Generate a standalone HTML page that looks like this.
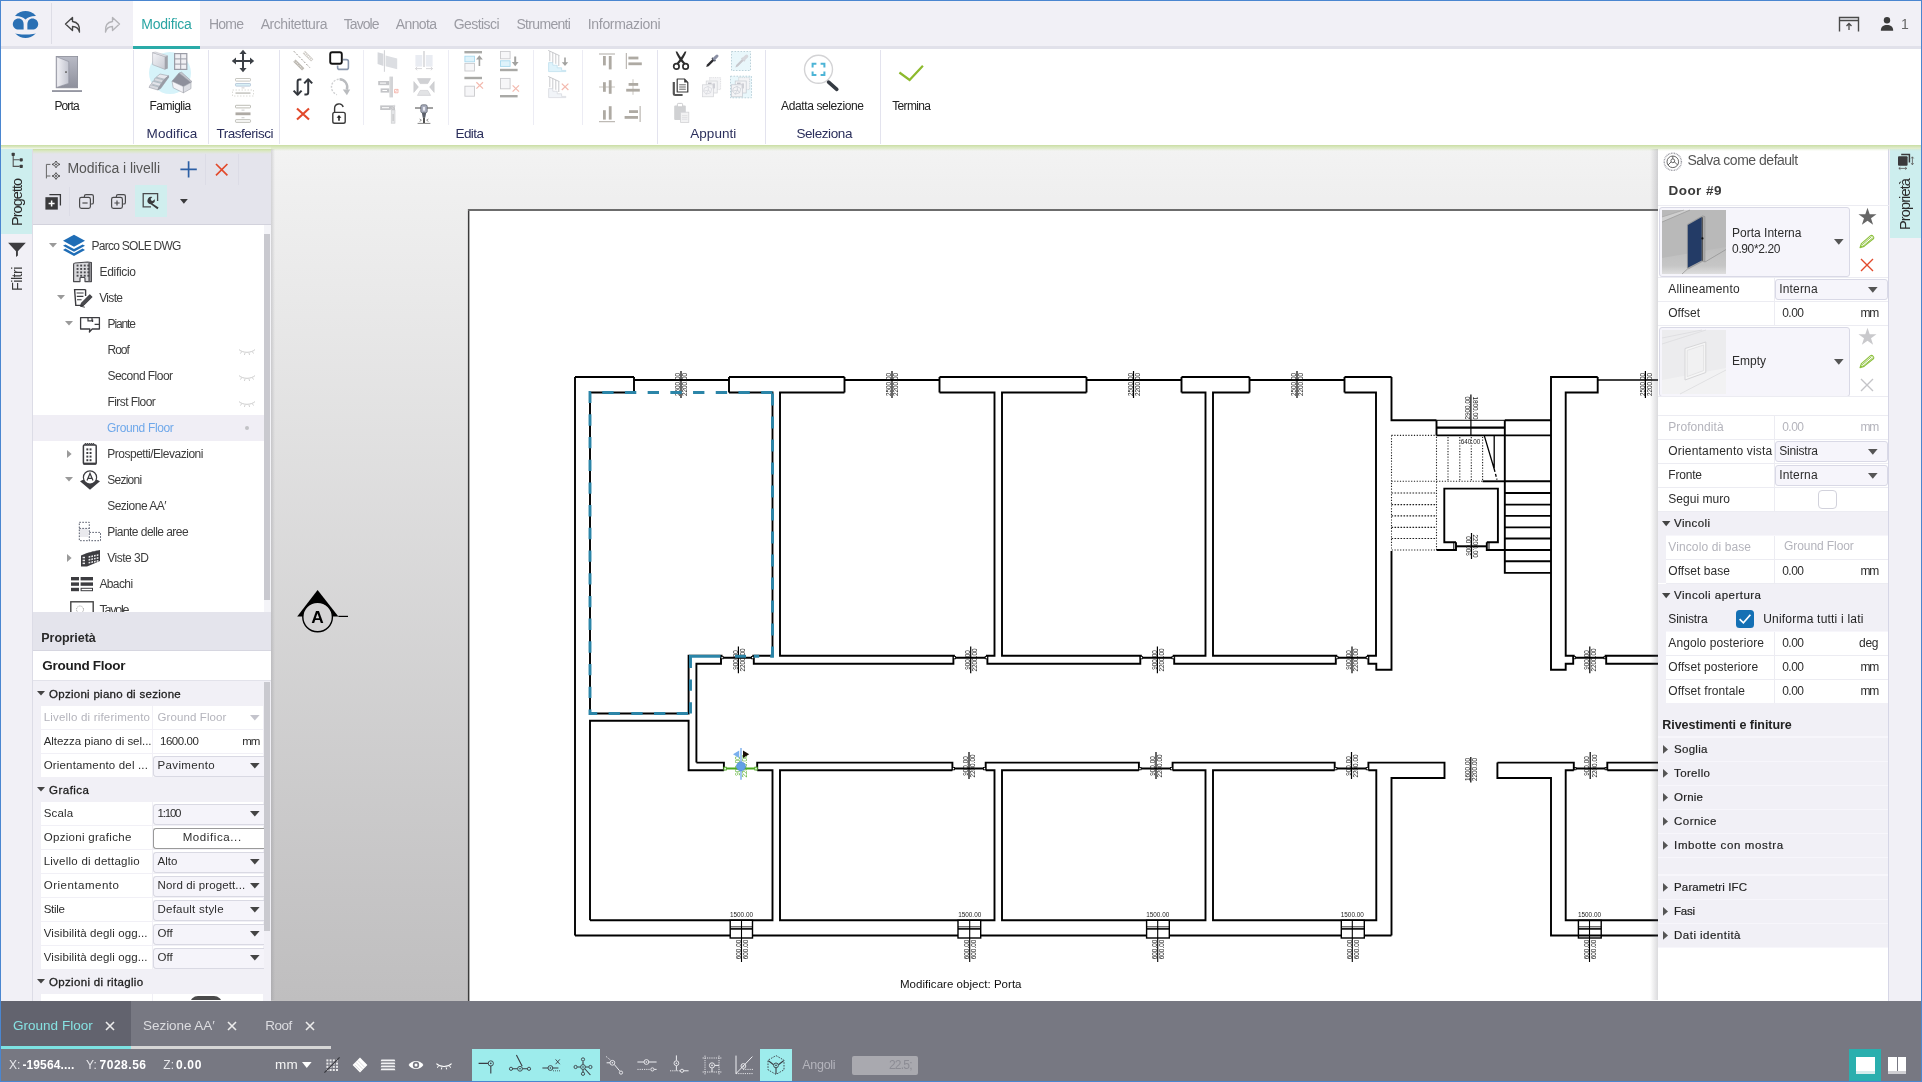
<!DOCTYPE html>
<html lang="it"><head><meta charset="utf-8"><title>Ground Floor</title>
<style>
html,body{margin:0;padding:0}
body{width:1922px;height:1082px;position:relative;overflow:hidden;background:#fff;font-family:"Liberation Sans",sans-serif}
.r{position:absolute;display:block}
.t{position:absolute;white-space:pre;line-height:1}
svg{overflow:visible}
</style></head><body><div id="app" style="position:absolute;left:0;top:0;width:1922px;height:1082px;will-change:transform">
<div class="r" style="left:1px;top:1px;width:1920px;height:45px;background:#f1f0f6;"></div>
<div class="r" style="left:1px;top:46px;width:1920px;height:3px;background:#e1e1ea;"></div>
<div class="r" style="left:133px;top:1px;width:67px;height:45px;background:#ffffff;"></div>
<div class="r" style="left:133px;top:46px;width:67px;height:3px;background:#2aaba8;"></div>
<div class="r" style="left:51px;top:3px;width:1px;height:41px;background:#dddde6;"></div>
<svg class="r" style="left:11px;top:10px;" width="29" height="29" viewBox="0 0 29 29">
<defs><clipPath id="lgc"><circle cx="14.5" cy="14.5" r="13.6"/></clipPath></defs>
<g clip-path="url(#lgc)" fill="#2a70b4">
<path d="M0 0H29V6.5C22 5.2 17.5 6.8 14.5 9.6C11.500 6.8 7 5.2 0 6.500Z"/>
<path d="M0 22.8C9 25.2 20 25.2 29 22.800V29H0Z"/>
<path d="M12.6 19.6H7.6C4.4 19.600 1.800 17.2 1.800 14C1.800 10.8 4.4 8.400 7.600 8.400C10.6 8.400 12.600 10.8 12.600 14Z"/>
<path d="M16.4 19.6H21.4C24.6 19.600 27.200 17.2 27.200 14C27.200 10.8 24.6 8.400 21.400 8.400C18.4 8.400 16.400 10.8 16.400 14Z"/>
</g></svg>
<svg class="r" style="left:63px;top:15px;" width="20" height="20" viewBox="0 0 20 20"><path d="M9.5 2.500L2.500 9L9.500 15.500V11.5C13.5 11.500 15.500 13 16.500 17C17 11 14.500 7 9.500 6.500Z" fill="none" stroke="#444" stroke-width="1.35" stroke-linejoin="round"/></svg>
<svg class="r" style="left:102px;top:15px;" width="20" height="20" viewBox="0 0 20 20"><path d="M10.5 2.500L17.500 9L10.500 15.500V11.5C6.500 11.500 4.500 13 3.500 17C3 11 5.500 7 10.500 6.500Z" fill="none" stroke="#b4b4b8" stroke-width="1.35" stroke-linejoin="round"/></svg>
<span class="t" style="left:141.3px;top:17.0px;font-size:14px;color:#2aa5a3;letter-spacing:-0.22px;">Modifica</span>
<span class="t" style="left:209.0px;top:17.0px;font-size:14px;color:#9b9ba3;letter-spacing:-0.79px;">Home</span>
<span class="t" style="left:260.7px;top:17.0px;font-size:14px;color:#9b9ba3;letter-spacing:-0.44px;">Architettura</span>
<span class="t" style="left:343.8px;top:17.0px;font-size:14px;color:#9b9ba3;letter-spacing:-0.95px;">Tavole</span>
<span class="t" style="left:395.8px;top:17.0px;font-size:14px;color:#9b9ba3;letter-spacing:-0.64px;">Annota</span>
<span class="t" style="left:453.7px;top:17.0px;font-size:14px;color:#9b9ba3;letter-spacing:-0.56px;">Gestisci</span>
<span class="t" style="left:516.4px;top:17.0px;font-size:14px;color:#9b9ba3;letter-spacing:-0.67px;">Strumenti</span>
<span class="t" style="left:587.8px;top:17.0px;font-size:14px;color:#9b9ba3;letter-spacing:-0.32px;">Informazioni</span>
<svg class="r" style="left:1838px;top:15px;" width="22" height="18" viewBox="0 0 22 18"><path d="M1.5 16.500V2.500H20.500V16.500M1.500 5.500H20.500" fill="none" stroke="#4a4a4a" stroke-width="1.4"/><path d="M11 15V8.500M8.500 11L11 8.500L13.500 11" fill="none" stroke="#4a4a4a" stroke-width="1.3"/></svg>
<svg class="r" style="left:1879.7px;top:16px;" width="14" height="16" viewBox="0 0 14 16"><circle cx="7" cy="4.200" r="3.2" fill="#3c3c3c"/><path d="M.8 14.800C.8 10.600 3.600 9 7 9C10.400 9 13.200 10.600 13.200 14.800Z" fill="#3c3c3c"/></svg>
<span class="t" style="left:1901.0px;top:17.0px;font-size:14px;color:#666;">1</span>
<div class="r" style="left:1px;top:49px;width:1920px;height:96px;background:#ffffff;"></div>
<div class="r" style="left:1px;top:145px;width:1920px;height:5px;background:linear-gradient(#c9dea2,#dbe8c4 40%,rgba(225,232,215,0))"></div>
<div class="r" style="left:133px;top:50px;width:1px;height:94px;background:#e3e3ee;"></div>
<div class="r" style="left:208px;top:50px;width:1px;height:94px;background:#e3e3ee;"></div>
<div class="r" style="left:279px;top:50px;width:1px;height:94px;background:#e3e3ee;"></div>
<div class="r" style="left:657px;top:50px;width:1px;height:94px;background:#e3e3ee;"></div>
<div class="r" style="left:765px;top:50px;width:1px;height:94px;background:#e3e3ee;"></div>
<div class="r" style="left:880px;top:50px;width:1px;height:94px;background:#e3e3ee;"></div>
<div class="r" style="left:363px;top:50px;width:1px;height:75px;background:#ececf4;"></div>
<div class="r" style="left:448px;top:50px;width:1px;height:75px;background:#ececf4;"></div>
<div class="r" style="left:533px;top:50px;width:1px;height:75px;background:#ececf4;"></div>
<div class="r" style="left:582px;top:50px;width:1px;height:75px;background:#ececf4;"></div>
<span class="t" style="left:54.4px;top:100.0px;font-size:12px;color:#222;letter-spacing:-0.87px;">Porta</span>
<span class="t" style="left:149.5px;top:100.0px;font-size:12px;color:#222;letter-spacing:-0.51px;">Famiglia</span>
<span class="t" style="left:781.1px;top:100.0px;font-size:12px;color:#222;letter-spacing:-0.39px;">Adatta selezione</span>
<span class="t" style="left:892.2px;top:100.0px;font-size:12px;color:#222;letter-spacing:-0.65px;">Termina</span>
<span class="t" style="left:146.6px;top:127.0px;font-size:13.5px;color:#2b2f5c;letter-spacing:0.06px;">Modifica</span>
<span class="t" style="left:216.4px;top:127.0px;font-size:13.5px;color:#2b2f5c;letter-spacing:-0.47px;">Trasferisci</span>
<span class="t" style="left:455.6px;top:127.0px;font-size:13.5px;color:#2b2f5c;letter-spacing:-0.62px;">Edita</span>
<span class="t" style="left:690.3px;top:127.0px;font-size:13.5px;color:#2b2f5c;letter-spacing:0.03px;">Appunti</span>
<span class="t" style="left:796.4px;top:127.0px;font-size:13.5px;color:#2b2f5c;letter-spacing:-0.41px;">Seleziona</span>
<svg class="r" style="left:50px;top:54px;" width="34" height="40" viewBox="0 0 34 40"><defs><linearGradient id="pg1" x1="0" y1="0" x2="1" y2="0"><stop offset="0" stop-color="#f2f2f6"/><stop offset="1" stop-color="#c2c4cf"/></linearGradient>
<linearGradient id="pg2" x1="0" y1="0" x2="0" y2="1"><stop offset="0" stop-color="#b9bbc6"/><stop offset="1" stop-color="#8e909c"/></linearGradient></defs>
<rect x="6.200" y="2.400" width="21.400" height="31.400" fill="url(#pg2)" stroke="#8a8c98" stroke-width=".8"/>
<path d="M6.600 2.800L18.800 7.600V29.400L6.600 33.400Z" fill="url(#pg1)" stroke="#8a8c98" stroke-width=".6"/>
<rect x="15.200" y="17.200" width="1.600" height="1.800" fill="#666"/>
<rect x="2" y="36.200" width="30" height="1.700" fill="#8a8c98"/></svg>
<svg class="r" style="left:148px;top:51px;" width="44" height="44" viewBox="0 0 44 44"><circle cx="22" cy="22" r="21" fill="#d6f3fa"/>
<defs><linearGradient id="fg1" x1="0" y1="0" x2="1" y2="1"><stop offset="0" stop-color="#f4f4f8"/><stop offset="1" stop-color="#c8cad2"/></linearGradient></defs>
<path d="M4.600 1.600L17 5.600V18.400L4.600 13.600Z" fill="url(#fg1)" stroke="#a4a6ae" stroke-width=".6"/>
<path d="M17 5.600L19.800 4.800V17.400L17 18.400Z" fill="#a0a2aa"/><path d="M4.600 1.600L7.400 1L19.800 4.800L17 5.600Z" fill="#e4e4ea" stroke="#a4a6ae" stroke-width=".4"/>
<rect x="26.600" y="2.600" width="12.200" height="15.800" fill="#f0f0f4" stroke="#9a9ca6" stroke-width="1.200"/>
<path d="M32.700 2.600V18.400M26.600 7.900H38.800M26.600 13.100H38.800" stroke="#9a9ca6" stroke-width="1"/>
<g stroke="#8e909a" stroke-width=".5"><path d="M1 36.400L9.800 39L11 36L2.400 33.600Z" fill="#d8dae0"/><path d="M3.400 33L12 35.400L13.200 32.400L4.800 30.200Z" fill="#e2e4ea"/><path d="M5.800 29.600L14.200 31.800L15.400 28.800L7.200 26.800Z" fill="#d8dae0"/><path d="M8.200 26.200L16.400 28.200L20.600 24.800L12 23Z" fill="#e6e8ee"/><path d="M9.800 39L12.600 37.600L20.600 26.400V24.800L16.400 28.200L11 36Z" fill="#9a9ca6"/></g>
<g stroke="#8e909a" stroke-width=".5"><path d="M24 30.200L31 22L43 31.400L35.400 35.600Z" fill="#8e909c"/><path d="M24 30.200L35.400 35.600V41.800L25.200 36.800Z" fill="#f4f4f8"/><path d="M35.400 35.600L43 31.400V37.600L35.400 41.800Z" fill="#dcdee4"/><path d="M31 22L33.600 21.200L44 30.600L43 31.400Z" fill="#c4c6ce"/></g></svg>
<svg class="r" style="left:231.0px;top:49.2px;" width="24" height="24" viewBox="0 0 24 24"><g fill="#3c4046"><path d="M12 .8L15.600 5H13V11H19V8.400L23.200 12L19 15.600V13H13V19H15.600L12 23.200L8.400 19H11V13H5V15.600L.8 12L5 8.400V11H11V5H8.400Z"/></g></svg>
<svg class="r" style="left:231.0px;top:75.2px;" width="24" height="24" viewBox="0 0 24 24"><g fill="none" stroke="#c6c6c0" stroke-width="1"><rect x="4.500" y="3.500" width="15" height="2.600" rx=".6"/><rect x="4.500" y="8.500" width="15" height="2.600" rx=".6" fill="#d9f0f6" stroke="#bcd"/><rect x="4.500" y="17.300" width="15" height="1.600" fill="#c8c8c4" stroke="none"/><rect x="1.500" y="15" width="21" height="6" stroke-dasharray="1.500 1.500" stroke="#dcdcd8"/></g><rect x="10.500" y="12.400" width="3" height="1" fill="#ccc"/></svg>
<svg class="r" style="left:231.0px;top:101.6px;" width="24" height="24" viewBox="0 0 24 24"><g fill="none" stroke="#bdbdb6" stroke-width="1"><rect x="4.500" y="3.300" width="15" height="2.600" rx=".6"/><rect x="4.500" y="17.700" width="15" height="2.600" rx=".6"/></g><rect x="4.500" y="10.400" width="15" height="2.800" fill="#aeaaa4"/><rect x="10.500" y="7.600" width="3" height="1" fill="#ccc"/><rect x="10.500" y="15.200" width="3" height="1" fill="#ccc"/></svg>
<svg class="r" style="left:291.0px;top:48.9px;" width="24" height="24" viewBox="0 0 24 24"><g stroke="#c0bdb6" fill="none"><path d="M2.800 2.200L18.800 18.600" stroke-dasharray="2 1.600" stroke-width=".9" stroke="#8a8680"/><path d="M12.800 3L21.200 11.400" stroke-width="3.200" stroke="#cfccc6"/><path d="M12.800 3L21.200 11.400" stroke-width="1.600" stroke="#fff" stroke-dasharray="1 1"/><path d="M3.400 11.600L12.200 20.400" stroke-width="3.200" stroke="#b9b5ae"/><path d="M3.400 11.600L12.200 20.400" stroke-width="1.200" stroke="#e8e6e2" stroke-dasharray="1 1"/></g></svg>
<svg class="r" style="left:327.0px;top:48.9px;" width="24" height="24" viewBox="0 0 24 24"><path d="M15.800 10.600H19.400Q21.400 10.600 21.400 12.600V18.400Q21.400 20.400 19.400 20.400H12.600Q10.600 20.400 10.600 18.400V16.400" fill="none" stroke="#8b98ad" stroke-width="1.600"/><rect x="3.200" y="3.200" width="11.600" height="11.600" rx="2" fill="#fff" stroke="#141414" stroke-width="1.900"/></svg>
<svg class="r" style="left:291.0px;top:75.2px;" width="24" height="24" viewBox="0 0 24 24"><g fill="none" stroke="#33373d" stroke-width="2" stroke-linejoin="round"><path d="M10.400 4.400H8.600Q6.600 4.400 6.600 6.400V19.200"/><path d="M2.600 15.600L6.600 19.800L10.600 15.600"/><path d="M13.400 19.600H15.200Q17.200 19.600 17.200 17.600V4.800"/><path d="M13.200 8.400L17.200 4.200L21.200 8.400"/></g></svg>
<svg class="r" style="left:327.0px;top:75.2px;" width="24" height="24" viewBox="0 0 24 24"><path d="M12.600 4.200A7.800 7.800 0 0 1 19.800 14.600" fill="none" stroke="#babcbf" stroke-width="2.400"/><path d="M15.800 14.600H23.200L19.900 20.200Z" fill="#babcbf"/><path d="M11.600 4.200A7.900 7.900 0 0 0 10 19.600" fill="none" stroke="#cfd0d2" stroke-width="1.400" stroke-dasharray="2 1.400"/></svg>
<svg class="r" style="left:291.0px;top:101.6px;" width="24" height="24" viewBox="0 0 24 24"><path d="M6 6.400L18 17.600M18 6.400L6 17.600" stroke="#e2492b" stroke-width="2.100" fill="none"/></svg>
<svg class="r" style="left:327.0px;top:101.6px;" width="24" height="24" viewBox="0 0 24 24"><rect x="5.800" y="10.400" width="12.400" height="10.800" rx="1.800" fill="none" stroke="#3a3a3a" stroke-width="1.400"/><path d="M7.600 10.400V6.400A4.400 4.400 0 0 1 16.200 5" fill="none" stroke="#3a3a3a" stroke-width="1.400"/><path d="M12 13L14.400 15.800H12.800V18.800H11.200V15.800H9.600Z" fill="#222"/></svg>
<svg class="r" style="left:375.5px;top:48.9px;" width="24" height="24" viewBox="0 0 24 24"><path d="M1.600 3.200L7.400 4.800V17L1.600 15Z" fill="#d6d8dc"/><path d="M9.600 6.600L21.200 9.600V20.200L9.600 17.200Z" fill="#dcdee2"/><path d="M8.400 1.200V22.800" stroke="#cfd0d4" stroke-width="1"/></svg>
<svg class="r" style="left:412.0px;top:48.9px;" width="24" height="24" viewBox="0 0 24 24"><rect x="3.400" y="6" width="6.800" height="11.600" fill="#e9ecf2"/><rect x="13.800" y="6" width="6.800" height="11.600" fill="#e9ecf2"/><path d="M12 2V18" stroke="#c9cacd" stroke-width="1.200"/><path d="M3.600 19.600H10M14 19.600H20.400M5.200 18L3.400 19.600L5.200 21.200M18.800 18L20.600 19.600L18.800 21.200" fill="none" stroke="#d2d3d6" stroke-width=".9"/></svg>
<svg class="r" style="left:375.5px;top:75.2px;" width="24" height="24" viewBox="0 0 24 24"><rect x="14.400" y="1.600" width="2.600" height="20.800" fill="#d2d3d6"/><rect x="13.600" y="1.600" width=".8" height="20.800" fill="#bfc0c3"/><rect x="2.200" y="6" width="11" height="4.200" fill="#c4c5c8"/><rect x="4.600" y="13.400" width="8.600" height="4.200" fill="#c4c5c8"/><path d="M4 8.100H10M6.400 15.500H11" stroke="#fff" stroke-width="1"/><path d="M18.600 14.400H22V17.800H18.600ZM18.600 17.800L22 14.400" stroke="#f5b5ab" stroke-width=".9" fill="none"/></svg>
<svg class="r" style="left:412.0px;top:75.2px;" width="24" height="24" viewBox="0 0 24 24"><g fill="#d0d1d4" stroke="#c2c3c6" stroke-width=".5"><path d="M5.400 3.600H18.600L15.800 8.600H8.200Z"/><path d="M5.400 20.400H18.600L15.800 15.400H8.200Z" fill="#e2e3e5"/><path d="M1.800 6.600L6.400 12L1.800 17.400Z"/><path d="M22.200 6.600L17.600 12L22.200 17.400Z"/></g></svg>
<svg class="r" style="left:375.5px;top:101.6px;" width="24" height="24" viewBox="0 0 24 24"><rect x="4.200" y="3.400" width="14.800" height="4.600" fill="#c4c5c8"/><rect x="15.200" y="8" width="3.800" height="13.200" fill="#e4e5e7" stroke="#c8c9cc" stroke-width=".6"/><path d="M6 5.700H13" stroke="#fff" stroke-width="1"/><path d="M17.100 12V19" stroke="#bbb" stroke-width=".9"/><path d="M14.800 8L19 3.400" stroke="#d8d8da" stroke-width="2.400" stroke-dasharray="1 1"/></svg>
<svg class="r" style="left:412.0px;top:101.6px;" width="24" height="24" viewBox="0 0 24 24"><rect x="8.800" y="2.800" width="6.400" height="8" rx="1.600" fill="#a9adbd" stroke="#555a66" stroke-width=".7"/><rect x="11" y="5" width="2" height="3.600" fill="#e8eaf2"/><path d="M3 6H8.800M15.200 6H21" stroke="#444" stroke-width="1"/><path d="M9.800 10.800H14.200L13.200 15.800H10.800Z" fill="#5a5f6a"/><path d="M12 15.800V21" stroke="#222" stroke-width="1.600"/><path d="M5.600 21.400H18.400" stroke="#777" stroke-width=".9"/><path d="M7.600 17L9.400 18.200L7.600 19.400M16.400 17L14.600 18.200L16.400 19.400" fill="none" stroke="#666" stroke-width=".7"/></svg>
<svg class="r" style="left:460.8px;top:49.9px;" width="24" height="24" viewBox="0 0 24 24"><rect x="3.400" y="1" width="17.600" height="2.400" fill="#a9a9a6"/><rect x="3.900" y="6.200" width="9.600" height="5.600" fill="#dff3fb" stroke="#a9d9ee" stroke-width=".9"/><rect x="3.900" y="13.400" width="9.600" height="7.600" fill="#f6f6f8" stroke="#c9c9cc" stroke-width=".9"/><path d="M19.200 16V9.400H21.800L18.400 5.200L15 9.400H17.600V16Z" fill="#a2a2a0"/></svg>
<svg class="r" style="left:497.3px;top:49.9px;" width="24" height="24" viewBox="0 0 24 24"><rect x="3" y="18.800" width="17.600" height="2.400" fill="#a9a9a6"/><rect x="3.500" y="1.400" width="9.600" height="7.400" fill="#f6f6f8" stroke="#c9c9cc" stroke-width=".9"/><rect x="3.500" y="10.800" width="9.600" height="5.600" fill="#dff3fb" stroke="#a9d9ee" stroke-width=".9"/><path d="M17.200 6.400V12H14.800L18.200 16.200L21.600 12H19.200V6.400Z" fill="#a2a2a0"/></svg>
<svg class="r" style="left:460.8px;top:76.2px;" width="24" height="24" viewBox="0 0 24 24"><rect x="3.400" y=".8" width="17.600" height="2.400" fill="#a9a9a6"/><rect x="3.900" y="10.200" width="9.600" height="10" fill="#f6f6f8" stroke="#c9c9cc" stroke-width=".9"/><path d="M15.400 6.200L22 12.600M22 6.200L15.400 12.600" stroke="#f3b9ae" stroke-width="1.200"/></svg>
<svg class="r" style="left:497.3px;top:76.2px;" width="24" height="24" viewBox="0 0 24 24"><rect x="3" y="19" width="17.600" height="2.400" fill="#a9a9a6"/><rect x="3.500" y="2.400" width="9.600" height="10.400" fill="#f6f6f8" stroke="#c9c9cc" stroke-width=".9"/><path d="M15.600 9.400L22 15.600M22 9.400L15.600 15.600" stroke="#f3b9ae" stroke-width="1.200"/></svg>
<svg class="r" style="left:546.4px;top:48.9px;" width="24" height="24" viewBox="0 0 24 24"><path d="M2.600 13.600H6.800V16.200H11.200V18.800H15.600V21.400H19.800V22.600H2.600Z" fill="#dff3fb" stroke="#b9dcec" stroke-width=".7"/><path d="M2.200 1.400L13.400 6.600M3.800 2.200V12.200M6.800 3.600V13.600M9.800 5V14.800M12.800 6.400V17" stroke="#c2c3c6" stroke-width=".9" fill="none"/><path d="M18.200 8.400V13.200H15.800L19 17L22.200 13.200H19.800V8.400Z" fill="#a2a2a0"/></svg>
<svg class="r" style="left:546.4px;top:75.2px;" width="24" height="24" viewBox="0 0 24 24"><path d="M2.600 13.600H6.800V16.200H11.200V18.800H15.600V21.400H19.800V22.600H2.600Z" fill="#f1f4f8" stroke="#d4d7dc" stroke-width=".7"/><path d="M2.200 1.400L13.400 6.600M3.800 2.200V12.200M6.800 3.600V13.600M9.800 5V14.800M12.800 6.400V17" stroke="#c2c3c6" stroke-width=".9" fill="none"/><path d="M15.800 8.600L22.400 15M22.400 8.600L15.800 15" stroke="#f3b9ae" stroke-width="1.200"/></svg>
<svg class="r" style="left:595.1px;top:48.9px;" width="24" height="24" viewBox="0 0 24 24"><g fill="#aeaaa3"><rect x="4" y="4.500" width="16" height="1"/><rect x="8" y="7" width="2.800" height="9.400"/><rect x="13.800" y="7" width="2.800" height="13.400"/></g></svg>
<svg class="r" style="left:621.1px;top:48.9px;" width="24" height="24" viewBox="0 0 24 24"><g fill="#aeaaa3"><rect x="4.800" y="4" width="1" height="16"/><rect x="7.400" y="7.600" width="10" height="2.800"/><rect x="7.400" y="13.400" width="13.400" height="2.800"/></g></svg>
<svg class="r" style="left:595.1px;top:75.2px;" width="24" height="24" viewBox="0 0 24 24"><g fill="#aeaaa3"><rect x="4" y="11.500" width="16" height="1" fill="#c9c6c0"/><rect x="8" y="7.200" width="2.800" height="9.600"/><rect x="13.800" y="5.200" width="2.800" height="13.600"/></g></svg>
<svg class="r" style="left:621.1px;top:75.2px;" width="24" height="24" viewBox="0 0 24 24"><g fill="#aeaaa3"><rect x="11.500" y="4.200" width="1" height="15.600" fill="#c9c6c0"/><rect x="7.600" y="8" width="9.600" height="2.800"/><rect x="5.200" y="13.800" width="13.600" height="2.800"/></g></svg>
<svg class="r" style="left:595.1px;top:101.6px;" width="24" height="24" viewBox="0 0 24 24"><g fill="#aeaaa3"><rect x="4" y="19.200" width="16" height="1"/><rect x="8" y="8.200" width="2.800" height="9.400"/><rect x="13.800" y="4.200" width="2.800" height="13.400"/></g></svg>
<svg class="r" style="left:621.1px;top:101.6px;" width="24" height="24" viewBox="0 0 24 24"><g fill="#aeaaa3"><rect x="18.600" y="4" width="1" height="16"/><rect x="8" y="8.200" width="9" height="2.800"/><rect x="3.600" y="14" width="13.400" height="2.800"/></g></svg>
<svg class="r" style="left:668.8px;top:48.9px;" width="24" height="24" viewBox="0 0 24 24"><g fill="none" stroke="#2e2e2e" stroke-width="1.700"><circle cx="7.400" cy="17.400" r="2.700"/><circle cx="16.600" cy="17.400" r="2.700"/></g><path d="M6.600 2.600C7.600 6 10.400 11.400 14.800 15.600L16.200 14C13 10 9.600 5 8.200 2.400Z" fill="#2e2e2e"/><path d="M17.400 2.600C16.400 6 13.600 11.400 9.200 15.600L7.800 14C11 10 14.400 5 15.800 2.400Z" fill="#2e2e2e"/></svg>
<svg class="r" style="left:700.0px;top:48.9px;" width="24" height="24" viewBox="0 0 24 24"><path d="M6.200 18L7 15.600L12.800 9.800L14.400 11.400L8.600 17.200Z" fill="#2c2c30"/><path d="M12 8.800L15.400 12.200" stroke="#555a66" stroke-width="1.700"/><path d="M14.400 9.600L17 7" stroke="#8a8fa4" stroke-width="3" stroke-linecap="round"/></svg>
<svg class="r" style="left:729.0px;top:48.9px;" width="24" height="24" viewBox="0 0 24 24"><rect x="2.500" y="2.500" width="19" height="19" fill="#e9f7fb" stroke="#b5cdd6" stroke-width=".9" stroke-dasharray="1.600 1.400"/><path d="M6.400 18.400L7.200 16L13.200 10L14.800 11.600L8.800 17.600Z" fill="#c6c7cc"/><path d="M12.600 9L15.800 12.200" stroke="#cfd0d6" stroke-width="1.800"/><path d="M15 9.800L17.600 7.200" stroke="#d6d7dc" stroke-width="3.400" stroke-linecap="round"/></svg>
<svg class="r" style="left:668.8px;top:75.2px;" width="24" height="24" viewBox="0 0 24 24"><path d="M4.800 7V18.600Q4.800 20 6.200 20H13.600" fill="none" stroke="#555" stroke-width="2.200"/><path d="M8.200 4H15.400L18.800 7.400V17H8.200Z" fill="#fff" stroke="#3a3a3a" stroke-width="1.200" stroke-linejoin="round"/><path d="M15.200 4V7.600H18.800Z" fill="#3a3a3a"/><path d="M10.200 9.800H16.800M10.200 12H16.800M10.200 14.200H16.800" stroke="#555" stroke-width=".9"/></svg>
<svg class="r" style="left:700.0px;top:75.2px;" width="24" height="24" viewBox="0 0 24 24"><g fill="#f4f4f6" stroke="#d2d3d8" stroke-width=".7"><rect x="9.600" y="2.600" width="11" height="12" stroke-dasharray="1 .8"/><rect x="6.200" y="6" width="11" height="12"/><rect x="2.600" y="9.800" width="11" height="12"/></g><path d="M4.400 13L8 11.400L11.800 13.600L10.600 17.800L6 19.200L3.600 16.200ZM8 11.400L8.600 15L10.600 17.800M8.600 15L6 19.200M8.600 15L3.600 16.200" fill="none" stroke="#d6d7dc" stroke-width=".7"/><rect x="8" y="7.600" width="3.600" height="1.400" fill="#c3c4ca"/><rect x="12.600" y="8.400" width="2.400" height="5" fill="#cfd0d6"/></svg>
<svg class="r" style="left:729.0px;top:75.2px;" width="24" height="24" viewBox="0 0 24 24"><rect x="1.500" y="1.200" width="21" height="21.600" fill="#e9f7fb" stroke="#b5cdd6" stroke-width=".9" stroke-dasharray="1.600 1.400"/><g fill="#f4f4f6" stroke="#c3c8d0" stroke-width=".7"><rect x="9.600" y="2.600" width="11" height="12" stroke-dasharray="1 .8"/><rect x="6.200" y="6" width="11" height="12"/><rect x="2.600" y="9.800" width="11" height="12"/></g><path d="M4.400 13L8 11.400L11.800 13.600L10.600 17.800L6 19.200L3.600 16.200ZM8 11.400L8.600 15L10.600 17.800M8.600 15L6 19.200M8.600 15L3.600 16.200" fill="none" stroke="#c9cdd4" stroke-width=".7"/><rect x="8" y="7.600" width="3.600" height="1.400" fill="#c3c4ca"/><rect x="12.600" y="8.400" width="2.400" height="5" fill="#cfd0d6"/></svg>
<svg class="r" style="left:668.8px;top:100.8px;" width="24" height="24" viewBox="0 0 24 24"><rect x="5.200" y="4.400" width="11.600" height="14.600" rx="1" fill="#d0d1d3"/><rect x="8.400" y="2.400" width="5.200" height="3.400" rx=".8" fill="#fff" stroke="#c9cacc" stroke-width=".9"/><rect x="11.600" y="11.200" width="8.200" height="10.200" fill="#f2f2f3" stroke="#d2d3d5" stroke-width=".8"/><path d="M13 14.600H18.400M13 16.400H18.400M13 18.200H18.400" stroke="#dcdcde" stroke-width=".8"/></svg>
<svg class="r" style="left:800px;top:52px;" width="44" height="44" viewBox="0 0 44 44"><circle cx="18.500" cy="17.300" r="14" fill="#fff" stroke="#d3d3d5" stroke-width="1.400"/><path d="M28.600 30.200L36.800 37.400" stroke="#353b43" stroke-width="3.600" stroke-linecap="round"/><g fill="none" stroke="#4cb4d6" stroke-width="2"><path d="M12.600 15.400V11.800H16.400M20.600 11.800H24.400V15.400M24.400 19.400V23H20.600M16.400 23H12.600V19.400"/></g></svg>
<svg class="r" style="left:896px;top:62px;" width="30" height="22" viewBox="0 0 30 22"><path d="M3.400 10.500L13.600 18L26.900 3.700" fill="none" stroke="#8dba2d" stroke-width="2.200"/></svg>
<div class="r" style="left:1px;top:149px;width:32px;height:852px;background:#f1f0f6;"></div>
<div class="r" style="left:32px;top:149px;width:1px;height:852px;background:#dcdce6;"></div>
<div class="r" style="left:1px;top:149px;width:31px;height:85px;background:#cdeeee;"></div>
<span class="t" style="left:22.4px;top:225.5px;font-size:14.5px;color:#2a2a2a;transform-origin:0 0;transform:rotate(-90deg) translateY(-12.3px);letter-spacing:-0.95px;">Progetto</span>
<span class="t" style="left:21.7px;top:291.0px;font-size:14.5px;color:#3a3a3a;transform-origin:0 0;transform:rotate(-90deg) translateY(-12.3px);letter-spacing:-0.58px;">Filtri</span>
<svg class="r" style="left:9px;top:152px;" width="16" height="19" viewBox="0 0 16 19"><g fill="#3c3c3c"><rect x="2.600" y=".8" width="3.200" height="3.200" rx=".8"/><rect x="10.600" y="6.200" width="3.200" height="3.200" rx=".8"/><rect x="10.600" y="12.800" width="3.200" height="3.200" rx=".8"/></g><path d="M4.200 4V14.400H10.600M4.200 7.800H10.600" fill="none" stroke="#555" stroke-width="1.100"/></svg>
<svg class="r" style="left:7px;top:241px;" width="20" height="18" viewBox="0 0 20 18"><path d="M1.100 1.800H18.800L10.900 10.200V14.600L9 16V10.200Z" fill="#3d3d40"/></svg>
<div class="r" style="left:33px;top:149px;width:238px;height:75px;background:#e4e4ec;"></div>
<div class="r" style="left:33px;top:149px;width:238px;height:5px;background:linear-gradient(#c9dea2,#dbe8c4 40%,rgba(228,228,236,0))"></div>
<div class="r" style="left:33px;top:224px;width:238px;height:1px;background:#d2d2dc;"></div>
<div class="r" style="left:135px;top:185px;width:32px;height:32px;background:#d0eeee;"></div>
<div class="r" style="left:205px;top:154px;width:1px;height:31px;background:#dcdce6;"></div>
<div class="r" style="left:238px;top:154px;width:1px;height:31px;background:#dcdce6;"></div>
<div class="r" style="left:69px;top:187px;width:1px;height:29px;background:#dcdce6;"></div>
<span class="t" style="left:67.5px;top:161.0px;font-size:14px;color:#555;letter-spacing:-0.05px;">Modifica i livelli</span>
<svg class="r" style="left:45px;top:159px;" width="18" height="22" viewBox="0 0 18 22"><path d="M1.400 19.400V5.400H5.400M1.400 17H5.400" fill="none" stroke="#666" stroke-width="1"/><g fill="none" stroke="#444" stroke-width=".9"><path d="M11 2L12.600 4.400L15 5.400L12.600 6.400L11 8.800L9.400 6.400L7 5.400L9.400 4.400Z"/><path d="M11 13.600L12.600 16L15 17L12.600 18L11 20.400L9.400 18L7 17L9.400 16Z"/></g><circle cx="11" cy="5.400" r=".9" fill="#444"/><circle cx="11" cy="17" r=".9" fill="#444"/></svg>
<svg class="r" style="left:179px;top:160px;" width="19" height="19" viewBox="0 0 19 19"><path d="M9.600 1.200V17.600M1.400 9.400H17.800" stroke="#2c5fa5" stroke-width="1.700" fill="none"/></svg>
<svg class="r" style="left:214px;top:162px;" width="15" height="15" viewBox="0 0 15 15"><path d="M2 2L13.400 13.400M13.400 2L2 13.400" stroke="#e2492b" stroke-width="1.700" fill="none"/></svg>
<svg class="r" style="left:44px;top:192px;" width="19" height="19" viewBox="0 0 19 19"><path d="M5.400 2.600H16.400V13.600" fill="none" stroke="#3a3a3c" stroke-width="1.300"/><rect x="1.400" y="5.200" width="12.400" height="12.400" fill="#3a3a3c"/><path d="M7.600 8.400V14.400M4.600 11.400H10.600" stroke="#fff" stroke-width="1.500"/></svg>
<svg class="r" style="left:77px;top:192px;" width="19" height="19" viewBox="0 0 19 19"><path d="M7.400 5.400V4.200Q7.400 2.600 9 2.600H14.800Q16.400 2.600 16.400 4.200V10.400Q16.400 12 14.800 12H13.600" fill="none" stroke="#4a4a4c" stroke-width="1.200"/><rect x="2.600" y="5.400" width="10.800" height="11" rx="1.800" fill="none" stroke="#4a4a4c" stroke-width="1.200"/><path d="M5.400 11H10.600" stroke="#4a4a4c" stroke-width="1.200"/></svg>
<svg class="r" style="left:109px;top:192px;" width="19" height="19" viewBox="0 0 19 19"><path d="M7.400 5.400V4.200Q7.400 2.600 9 2.600H14.800Q16.400 2.600 16.400 4.200V10.400Q16.400 12 14.800 12H13.600" fill="none" stroke="#4a4a4c" stroke-width="1.200"/><rect x="2.600" y="5.400" width="10.800" height="11" rx="1.800" fill="none" stroke="#4a4a4c" stroke-width="1.200"/><path d="M5.400 11H10.600M8 8.400V13.600" stroke="#4a4a4c" stroke-width="1.200"/></svg>
<svg class="r" style="left:141px;top:191px;" width="20" height="20" viewBox="0 0 20 20"><path d="M16.600 10V2.600H2.200V15.800H10" fill="none" stroke="#4a4a4c" stroke-width="1.300"/><path d="M6.800 8.200A3.300 3.300 0 0 1 11.400 6L9.600 7.800L10.200 9.400L11.800 10L13.600 8.200A3.300 3.300 0 0 1 11.400 12.400L17.600 16.400L16.400 18.200L9.800 13.200A3.300 3.300 0 0 1 6.800 8.200Z" fill="#3a3a3c"/></svg>
<svg class="r" style="left:179px;top:198px;" width="10" height="7" viewBox="0 0 10 7"><path d="M1 1H8.800L4.900 5.800Z" fill="#3a3a3c"/></svg>
<div class="r" style="left:33px;top:225px;width:231px;height:387px;background:#ffffff;"></div>
<div class="r" style="left:264px;top:225px;width:7px;height:387px;background:#f4f4f8;"></div>
<div class="r" style="left:264px;top:234px;width:6px;height:366px;background:#c9c9cf;"></div>
<div class="r" style="left:33px;top:415px;width:231px;height:26px;background:#f0eef5;"></div>
<span class="t" style="left:91.6px;top:240.0px;font-size:12px;color:#3c3c3c;letter-spacing:-0.74px;">Parco SOLE DWG</span>
<span class="t" style="left:99.5px;top:266.0px;font-size:12px;color:#3c3c3c;letter-spacing:-0.31px;">Edificio</span>
<span class="t" style="left:99.2px;top:292.0px;font-size:12px;color:#3c3c3c;letter-spacing:-0.67px;">Viste</span>
<span class="t" style="left:107.5px;top:318.0px;font-size:12px;color:#3c3c3c;letter-spacing:-1.11px;">Piante</span>
<span class="t" style="left:107.5px;top:344.0px;font-size:12px;color:#3c3c3c;letter-spacing:-1.02px;">Roof</span>
<span class="t" style="left:107.5px;top:370.0px;font-size:12px;color:#3c3c3c;letter-spacing:-0.53px;">Second Floor</span>
<span class="t" style="left:107.5px;top:396.0px;font-size:12px;color:#3c3c3c;letter-spacing:-0.57px;">First Floor</span>
<span class="t" style="left:107.0px;top:422.0px;font-size:12px;color:#6fa8ea;letter-spacing:-0.35px;">Ground Floor</span>
<span class="t" style="left:107.2px;top:448.0px;font-size:12px;color:#3c3c3c;letter-spacing:-0.48px;">Prospetti/Elevazioni</span>
<span class="t" style="left:107.2px;top:474.0px;font-size:12px;color:#3c3c3c;letter-spacing:-0.74px;">Sezioni</span>
<span class="t" style="left:107.2px;top:500.0px;font-size:12px;color:#3c3c3c;letter-spacing:-0.50px;">Sezione AA′</span>
<span class="t" style="left:107.2px;top:526.0px;font-size:12px;color:#3c3c3c;letter-spacing:-0.54px;">Piante delle aree</span>
<span class="t" style="left:107.2px;top:552.0px;font-size:12px;color:#3c3c3c;letter-spacing:-0.48px;">Viste 3D</span>
<span class="t" style="left:99.4px;top:578.0px;font-size:12px;color:#3c3c3c;letter-spacing:-0.60px;">Abachi</span>
<div class="r" style="left:33px;top:598px;width:231px;height:14px;overflow:hidden">
<span class="t" style="left:66.4px;top:6.0px;font-size:12.5px;color:#3c3c3c;letter-spacing:-1.20px;">Tavole</span>
<svg class="r" style="left:37px;top:3px;" width="24" height="16" viewBox="0 0 24 16"><rect x=".8" y=".8" width="22.400" height="16" fill="none" stroke="#444" stroke-width="1.400"/><circle cx="10" cy="8.500" r="3.500" fill="none" stroke="#888" stroke-width=".8" stroke-dasharray="1.200 1"/></svg>
</div>
<svg class="r" style="left:48.9px;top:243.0px;" width="8" height="5" viewBox="0 0 8 5"><path d="M0 0H8L4 4.600Z" fill="#9a9a9a"/></svg>
<svg class="r" style="left:57px;top:295.0px;" width="8" height="5" viewBox="0 0 8 5"><path d="M0 0H8L4 4.600Z" fill="#9a9a9a"/></svg>
<svg class="r" style="left:64.9px;top:321.1px;" width="8" height="5" viewBox="0 0 8 5"><path d="M0 0H8L4 4.600Z" fill="#9a9a9a"/></svg>
<svg class="r" style="left:66.8px;top:449.8px;" width="5" height="8" viewBox="0 0 5 8"><path d="M0 0V8L4.600 4Z" fill="#9a9a9a"/></svg>
<svg class="r" style="left:64.8px;top:477.0px;" width="8" height="5" viewBox="0 0 8 5"><path d="M0 0H8L4 4.600Z" fill="#9a9a9a"/></svg>
<svg class="r" style="left:66.8px;top:553.8px;" width="5" height="8" viewBox="0 0 5 8"><path d="M0 0V8L4.600 4Z" fill="#9a9a9a"/></svg>
<svg class="r" style="left:238px;top:347.5px;" width="18" height="8" viewBox="0 0 18 8"><path d="M1 1.600C5 5.200 13 5.200 17 1.600" fill="none" stroke="#c6c6c6" stroke-width=".9"/><path d="M3.600 3.800L2.400 5.600M7 5L6.400 7M11 5L11.600 7M14.400 3.800L15.600 5.600" stroke="#c6c6c6" stroke-width=".8"/></svg>
<svg class="r" style="left:238px;top:373.5px;" width="18" height="8" viewBox="0 0 18 8"><path d="M1 1.600C5 5.200 13 5.200 17 1.600" fill="none" stroke="#c6c6c6" stroke-width=".9"/><path d="M3.600 3.800L2.400 5.600M7 5L6.400 7M11 5L11.600 7M14.400 3.800L15.600 5.600" stroke="#c6c6c6" stroke-width=".8"/></svg>
<svg class="r" style="left:238px;top:399.5px;" width="18" height="8" viewBox="0 0 18 8"><path d="M1 1.600C5 5.200 13 5.200 17 1.600" fill="none" stroke="#c6c6c6" stroke-width=".9"/><path d="M3.600 3.800L2.400 5.600M7 5L6.400 7M11 5L11.600 7M14.400 3.800L15.600 5.600" stroke="#c6c6c6" stroke-width=".8"/></svg>
<div class="r" style="left:245px;top:426px;width:4px;height:4px;border-radius:2px;background:#c2c2c6"></div>
<svg class="r" style="left:62px;top:234px;" width="24" height="22" viewBox="0 0 24 22"><g fill="#1f6db6"><path d="M12 .8L23 6.800L12 12.800L1 6.800Z"/><path d="M3.400 10.400L12 15.100L20.600 10.400L23 11.700L12 17.700L1 11.700Z"/><path d="M3.400 14.600L12 19.300L20.600 14.600L23 15.900L12 21.900L1 15.900Z"/></g></svg>
<svg class="r" style="left:72px;top:261px;" width="21" height="22" viewBox="0 0 21 22"><path d="M1.600 20.600V3.400Q1.600 2 3 2L15.600 1L19.400 1.600V20.600H13V17.600Q13 16.400 11.800 16.400H9.200Q8 16.400 8 17.600V20.600Z" fill="#d9d9dc" stroke="#4a4a4e" stroke-width="1.200" stroke-linejoin="round"/><path d="M17.400 1.400V20.600" stroke="#6a6a6e" stroke-width="2.200"/><rect x="4.6" y="3.6" width="1.900" height="1.900" fill="#4a4a4e"/><rect x="4.6" y="7.0" width="1.900" height="1.900" fill="#4a4a4e"/><rect x="4.6" y="10.4" width="1.900" height="1.900" fill="#4a4a4e"/><rect x="4.6" y="13.799999999999999" width="1.900" height="1.900" fill="#4a4a4e"/><rect x="8.2" y="3.6" width="1.900" height="1.900" fill="#4a4a4e"/><rect x="8.2" y="7.0" width="1.900" height="1.900" fill="#4a4a4e"/><rect x="8.2" y="10.4" width="1.900" height="1.900" fill="#4a4a4e"/><rect x="8.2" y="13.799999999999999" width="1.900" height="1.900" fill="#4a4a4e"/><rect x="11.8" y="3.6" width="1.900" height="1.900" fill="#4a4a4e"/><rect x="11.8" y="7.0" width="1.900" height="1.900" fill="#4a4a4e"/><rect x="11.8" y="10.4" width="1.900" height="1.900" fill="#4a4a4e"/><rect x="11.8" y="13.799999999999999" width="1.900" height="1.900" fill="#4a4a4e"/><rect x="15.4" y="3.6" width="1.900" height="1.900" fill="#4a4a4e"/><rect x="15.4" y="7.0" width="1.900" height="1.900" fill="#4a4a4e"/><rect x="15.4" y="10.4" width="1.900" height="1.900" fill="#4a4a4e"/><rect x="15.4" y="13.799999999999999" width="1.900" height="1.900" fill="#4a4a4e"/></svg>
<svg class="r" style="left:72px;top:287px;" width="22" height="22" viewBox="0 0 22 22"><path d="M13.600 2.600H2.600L3.800 18.400H11" fill="none" stroke="#3c3c40" stroke-width="1.400"/><path d="M13.600 2.600V9" stroke="#3c3c40" stroke-width="1.400"/><path d="M4.600 6H11.600M4.800 9.400H11.400M5 12.800H9.600" stroke="#3c3c40" stroke-width="1.100"/><path d="M8.400 19.200L9.400 16L17.800 7.600L20.200 10L11.800 18.400Z" fill="#4a4a4e" stroke="#2a2a2e" stroke-width=".7"/><path d="M8.400 19.200L12.800 20.200" stroke="#3c3c40" stroke-width="1"/></svg>
<svg class="r" style="left:79px;top:316px;" width="22" height="18" viewBox="0 0 22 18"><path d="M1.600 1.600H20.400V13H13.200L10.400 16L10.800 13H1.600Z" fill="#fff" stroke="#3c3c40" stroke-width="1.300" stroke-linejoin="round"/><path d="M9 1.600V4.800H13V1.600M15.600 8.400H20.400M13.600 3.400V6" stroke="#3c3c40" stroke-width="1.200" fill="none"/></svg>
<svg class="r" style="left:82px;top:442px;" width="16" height="24" viewBox="0 0 16 24"><rect x="1.400" y="3" width="12.800" height="19" rx="1" fill="#fff" stroke="#3c3c40" stroke-width="1.500"/><path d="M2.600 3L3.400 1L4.400 3L5.400 1L6.400 3L7.400 1L8.400 3L9.400 1L10.400 3L11.400 1L12.400 3" fill="none" stroke="#3c3c40" stroke-width=".9"/><rect x="1.400" y="20.600" width="12.800" height="2" fill="#3c3c40"/><rect x="4.4" y="6.4" width="1.900" height="2" fill="#3c3c40"/><rect x="4.4" y="10.0" width="1.900" height="2" fill="#3c3c40"/><rect x="4.4" y="13.600000000000001" width="1.900" height="2" fill="#3c3c40"/><rect x="4.4" y="17.200000000000003" width="1.900" height="2" fill="#3c3c40"/><rect x="7.6000000000000005" y="6.4" width="1.900" height="2" fill="#3c3c40"/><rect x="7.6000000000000005" y="10.0" width="1.900" height="2" fill="#3c3c40"/><rect x="7.6000000000000005" y="13.600000000000001" width="1.900" height="2" fill="#3c3c40"/><rect x="7.6000000000000005" y="17.200000000000003" width="1.900" height="2" fill="#3c3c40"/></svg>
<svg class="r" style="left:79px;top:469px;" width="22" height="22" viewBox="0 0 22 22"><path d="M1 12.200L11 20.800L21 12.200L17.400 10.600Q11 19 4.600 10.600Z" fill="#3c3c40"/><circle cx="11" cy="8.400" r="6.600" fill="#fff" stroke="#3c3c40" stroke-width="1.200"/><path d="M8 11.600L11 4.400L14 11.600M9 9.400H13" fill="none" stroke="#3c3c40" stroke-width="1.200"/></svg>
<svg class="r" style="left:78px;top:521px;" width="24" height="21" viewBox="0 0 24 21"><rect x="1.300" y="7.400" width="9" height="8.600" fill="#eaeaee"/><g fill="none" stroke="#555a6a" stroke-width="1" stroke-dasharray="1.600 1.400"><rect x="1.300" y="1.300" width="10" height="18.400"/><path d="M1.300 7.400H11.300M11.300 11.400H22.500V19.700H11.300"/></g></svg>
<svg class="r" style="left:80px;top:548px;" width="21" height="20" viewBox="0 0 21 20"><path d="M1 7.400L7 5L20 2V13L7 18.600H1Z" fill="#3c3c40"/><path d="M1 7.400L13 3.200L20 2L7 5.600Z" fill="#55555a"/><path d="M8.6 8.2l1.700 -.35v1.600l-1.700 .35Z" fill="#e8e8ea"/><path d="M8.6 11.1l1.700 -.35v1.600l-1.700 .35Z" fill="#e8e8ea"/><path d="M8.6 14.0l1.700 -.35v1.600l-1.700 .35Z" fill="#e8e8ea"/><path d="M11.3 7.6499999999999995l1.700 -.35v1.600l-1.700 .35Z" fill="#e8e8ea"/><path d="M11.3 10.549999999999999l1.700 -.35v1.600l-1.700 .35Z" fill="#e8e8ea"/><path d="M11.3 13.45l1.700 -.35v1.600l-1.700 .35Z" fill="#e8e8ea"/><path d="M14.0 7.1l1.700 -.35v1.600l-1.700 .35Z" fill="#e8e8ea"/><path d="M14.0 10.0l1.700 -.35v1.600l-1.700 .35Z" fill="#e8e8ea"/><path d="M14.0 12.9l1.700 -.35v1.600l-1.700 .35Z" fill="#e8e8ea"/><path d="M16.700000000000003 6.549999999999999l1.700 -.35v1.600l-1.700 .35Z" fill="#e8e8ea"/><path d="M16.700000000000003 9.45l1.700 -.35v1.600l-1.700 .35Z" fill="#e8e8ea"/><path d="M16.700000000000003 12.35l1.700 -.35v1.600l-1.700 .35Z" fill="#e8e8ea"/><rect x="2.600" y="8.8" width="2.400" height="1.500" fill="#e8e8ea"/><rect x="2.600" y="11.700000000000001" width="2.400" height="1.500" fill="#e8e8ea"/><rect x="2.600" y="14.600000000000001" width="2.400" height="1.500" fill="#e8e8ea"/></svg>
<svg class="r" style="left:70px;top:576px;" width="24" height="16" viewBox="0 0 24 16"><g fill="#3c3c40"><rect x="1" y="1" width="8" height="3.400"/><rect x="10.600" y="1" width="12.400" height="3.400"/><rect x="1" y="6.400" width="8" height="3.400"/><rect x="10.600" y="6.400" width="12.400" height="3.400"/><rect x="1" y="11.800" width="8" height="3.400"/></g><rect x="11.100" y="12.300" width="11.400" height="2.400" fill="#fff" stroke="#3c3c40" stroke-width="1"/></svg>
<div class="r" style="left:33px;top:612px;width:238px;height:39px;background:#e4e4ec;"></div>
<div class="r" style="left:33px;top:650px;width:238px;height:1px;background:#d6d6e0;"></div>
<div class="r" style="left:33px;top:651px;width:238px;height:30px;background:#ffffff;"></div>
<div class="r" style="left:33px;top:681px;width:238px;height:320px;background:#f1f0f6;"></div>
<div class="r" style="left:33px;top:680px;width:238px;height:1px;background:#e2e2ea;"></div>
<span class="t" style="left:41.3px;top:632.0px;font-size:12.5px;color:#2a2a2a;font-weight:700;letter-spacing:-0.06px;">Proprietà</span>
<span class="t" style="left:42.3px;top:659.0px;font-size:13.5px;color:#1e1e1e;font-weight:700;letter-spacing:-0.28px;">Ground Floor</span>
<div class="r" style="left:264px;top:682px;width:6px;height:249px;background:#c9c9cf;"></div>
<svg class="r" style="left:37px;top:691.1999999999999px;" width="8" height="5" viewBox="0 0 8 5"><path d="M0 0H8L4 4.600Z" fill="#444"/></svg>
<span class="t" style="left:49.0px;top:689.0px;font-size:11.5px;color:#1e1e1e;letter-spacing:0.28px;-webkit-text-stroke:.3px #1e1e1e;">Opzioni piano di sezione</span>
<div class="r" style="left:41px;top:706.0px;width:111px;height:23.0px;background:#ffffff;"></div>
<div class="r" style="left:153px;top:706.0px;width:110.19999999999999px;height:23.0px;background:#ffffff;"></div>
<span class="t" style="left:43.7px;top:712.0px;font-size:11.5px;color:#b4b4bc;letter-spacing:0.19px;">Livello di riferimento</span>
<span class="t" style="left:157.5px;top:712.0px;font-size:11.5px;color:#b4b4bc;letter-spacing:0.10px;">Ground Floor</span>
<svg class="r" style="left:250px;top:715.0px;" width="10" height="6" viewBox="0 0 10 6"><path d="M0 0H9.600L4.800 5.600Z" fill="#c4c4cc"/></svg>
<div class="r" style="left:41px;top:730.0px;width:111px;height:23.0px;background:#ffffff;"></div>
<div class="r" style="left:153px;top:730.0px;width:110.19999999999999px;height:23.0px;background:#ffffff;"></div>
<span class="t" style="left:43.7px;top:736.0px;font-size:11.5px;color:#2c2c2c;letter-spacing:-0.04px;">Altezza piano di sel...</span>
<span class="t" style="left:159.9px;top:736.0px;font-size:11.5px;color:#2c2c2c;letter-spacing:-0.41px;">1600.00</span>
<span class="t" style="left:242.3px;top:736.0px;font-size:11.5px;color:#2c2c2c;letter-spacing:-1.17px;">mm</span>
<div class="r" style="left:41px;top:754.0px;width:111px;height:23.0px;background:#ffffff;"></div>
<div class="r" style="left:153px;top:754.0px;width:110.19999999999999px;height:23.0px;background:#ffffff;"></div>
<span class="t" style="left:43.7px;top:760.0px;font-size:11.5px;color:#2c2c2c;letter-spacing:0.17px;">Orientamento del ...</span>
<div class="r" style="left:153px;top:755.5px;width:110px;height:19px;background:#f5f4fa;border:1px solid #d9d9e3;border-right:none;border-radius:3px 0 0 3px"></div>
<span class="t" style="left:157.5px;top:760.0px;font-size:11.5px;color:#2c2c2c;letter-spacing:0.36px;">Pavimento</span>
<svg class="r" style="left:250px;top:763.0px;" width="10" height="6" viewBox="0 0 10 6"><path d="M0 0H9.600L4.800 5.600Z" fill="#444"/></svg>
<svg class="r" style="left:37px;top:787.1999999999999px;" width="8" height="5" viewBox="0 0 8 5"><path d="M0 0H8L4 4.600Z" fill="#444"/></svg>
<span class="t" style="left:49.0px;top:785.0px;font-size:11.5px;color:#1e1e1e;letter-spacing:0.49px;-webkit-text-stroke:.3px #1e1e1e;">Grafica</span>
<div class="r" style="left:41px;top:802.0px;width:111px;height:23.0px;background:#ffffff;"></div>
<div class="r" style="left:153px;top:802.0px;width:110.19999999999999px;height:23.0px;background:#ffffff;"></div>
<span class="t" style="left:43.7px;top:808.0px;font-size:11.5px;color:#2c2c2c;letter-spacing:0.20px;">Scala</span>
<div class="r" style="left:153px;top:803.5px;width:110px;height:19px;background:#f5f4fa;border:1px solid #d9d9e3;border-right:none;border-radius:3px 0 0 3px"></div>
<span class="t" style="left:157.5px;top:808.0px;font-size:11.5px;color:#2c2c2c;letter-spacing:-1.20px;">1:100</span>
<svg class="r" style="left:250px;top:811.0px;" width="10" height="6" viewBox="0 0 10 6"><path d="M0 0H9.600L4.800 5.600Z" fill="#444"/></svg>
<div class="r" style="left:41px;top:826.0px;width:111px;height:23.0px;background:#ffffff;"></div>
<div class="r" style="left:153px;top:826.0px;width:110.19999999999999px;height:23.0px;background:#ffffff;"></div>
<span class="t" style="left:43.7px;top:832.0px;font-size:11.5px;color:#2c2c2c;letter-spacing:0.30px;">Opzioni grafiche</span>
<div class="r" style="left:153px;top:827.500px;width:110px;height:19px;background:#fff;border:1px solid #9a9a9a;border-right:none;border-radius:3px 0 0 3px"></div>
<span class="t" style="left:182.7px;top:832.0px;font-size:11.5px;color:#2c2c2c;letter-spacing:0.60px;">Modifica...</span>
<div class="r" style="left:41px;top:850.0px;width:111px;height:23.0px;background:#ffffff;"></div>
<div class="r" style="left:153px;top:850.0px;width:110.19999999999999px;height:23.0px;background:#ffffff;"></div>
<span class="t" style="left:43.7px;top:856.0px;font-size:11.5px;color:#2c2c2c;letter-spacing:0.24px;">Livello di dettaglio</span>
<div class="r" style="left:153px;top:851.5px;width:110px;height:19px;background:#f5f4fa;border:1px solid #d9d9e3;border-right:none;border-radius:3px 0 0 3px"></div>
<span class="t" style="left:157.5px;top:856.0px;font-size:11.5px;color:#2c2c2c;letter-spacing:0.06px;">Alto</span>
<svg class="r" style="left:250px;top:859.0px;" width="10" height="6" viewBox="0 0 10 6"><path d="M0 0H9.600L4.800 5.600Z" fill="#444"/></svg>
<div class="r" style="left:41px;top:874.0px;width:111px;height:23.0px;background:#ffffff;"></div>
<div class="r" style="left:153px;top:874.0px;width:110.19999999999999px;height:23.0px;background:#ffffff;"></div>
<span class="t" style="left:43.7px;top:880.0px;font-size:11.5px;color:#2c2c2c;letter-spacing:0.51px;">Orientamento</span>
<div class="r" style="left:153px;top:875.5px;width:110px;height:19px;background:#f5f4fa;border:1px solid #d9d9e3;border-right:none;border-radius:3px 0 0 3px"></div>
<span class="t" style="left:157.5px;top:880.0px;font-size:11.5px;color:#2c2c2c;letter-spacing:0.12px;">Nord di progett...</span>
<svg class="r" style="left:250px;top:883.0px;" width="10" height="6" viewBox="0 0 10 6"><path d="M0 0H9.600L4.800 5.600Z" fill="#444"/></svg>
<div class="r" style="left:41px;top:898.0px;width:111px;height:23.0px;background:#ffffff;"></div>
<div class="r" style="left:153px;top:898.0px;width:110.19999999999999px;height:23.0px;background:#ffffff;"></div>
<span class="t" style="left:43.7px;top:904.0px;font-size:11.5px;color:#2c2c2c;letter-spacing:-0.27px;">Stile</span>
<div class="r" style="left:153px;top:899.5px;width:110px;height:19px;background:#f5f4fa;border:1px solid #d9d9e3;border-right:none;border-radius:3px 0 0 3px"></div>
<span class="t" style="left:157.5px;top:904.0px;font-size:11.5px;color:#2c2c2c;letter-spacing:0.23px;">Default style</span>
<svg class="r" style="left:250px;top:907.0px;" width="10" height="6" viewBox="0 0 10 6"><path d="M0 0H9.600L4.800 5.600Z" fill="#444"/></svg>
<div class="r" style="left:41px;top:922.0px;width:111px;height:23.0px;background:#ffffff;"></div>
<div class="r" style="left:153px;top:922.0px;width:110.19999999999999px;height:23.0px;background:#ffffff;"></div>
<span class="t" style="left:43.7px;top:928.0px;font-size:11.5px;color:#2c2c2c;letter-spacing:0.11px;">Visibilità degli ogg...</span>
<div class="r" style="left:153px;top:923.5px;width:110px;height:19px;background:#f5f4fa;border:1px solid #d9d9e3;border-right:none;border-radius:3px 0 0 3px"></div>
<span class="t" style="left:157.5px;top:928.0px;font-size:11.5px;color:#2c2c2c;letter-spacing:0.03px;">Off</span>
<svg class="r" style="left:250px;top:931.0px;" width="10" height="6" viewBox="0 0 10 6"><path d="M0 0H9.600L4.800 5.600Z" fill="#444"/></svg>
<div class="r" style="left:41px;top:946.0px;width:111px;height:23.0px;background:#ffffff;"></div>
<div class="r" style="left:153px;top:946.0px;width:110.19999999999999px;height:23.0px;background:#ffffff;"></div>
<span class="t" style="left:43.7px;top:952.0px;font-size:11.5px;color:#2c2c2c;letter-spacing:0.11px;">Visibilità degli ogg...</span>
<div class="r" style="left:153px;top:947.5px;width:110px;height:19px;background:#f5f4fa;border:1px solid #d9d9e3;border-right:none;border-radius:3px 0 0 3px"></div>
<span class="t" style="left:157.5px;top:952.0px;font-size:11.5px;color:#2c2c2c;letter-spacing:0.03px;">Off</span>
<svg class="r" style="left:250px;top:955.0px;" width="10" height="6" viewBox="0 0 10 6"><path d="M0 0H9.600L4.800 5.600Z" fill="#444"/></svg>
<svg class="r" style="left:37px;top:979.1999999999999px;" width="8" height="5" viewBox="0 0 8 5"><path d="M0 0H8L4 4.600Z" fill="#444"/></svg>
<span class="t" style="left:49.0px;top:977.0px;font-size:11.5px;color:#1e1e1e;letter-spacing:0.33px;-webkit-text-stroke:.3px #1e1e1e;">Opzioni di ritaglio</span>
<div class="r" style="left:41px;top:994px;width:111px;height:7px;background:#ffffff;"></div>
<div class="r" style="left:153px;top:994px;width:110.19999999999999px;height:7px;background:#ffffff;"></div>
<div class="r" style="left:190px;top:996px;width:32px;height:16px;border-radius:8px;background:#4a4a4a;clip-path:inset(0 0 12px 0)"></div>
<div class="r" style="left:271px;top:149px;width:1387px;height:852px;background:linear-gradient(#f3f3f3,#f0f0f0 4%,#bfbebf 100%)"></div>
<div class="r" style="left:271px;top:145px;width:1387px;height:6px;background:linear-gradient(#c9dea2,#dbe8c4 40%,rgba(240,240,240,0))"></div>
<div class="r" style="left:271px;top:149px;width:4px;height:851px;background:linear-gradient(90deg,rgba(120,120,130,.25),rgba(120,120,130,0))"></div>
<div class="r" style="left:468px;top:209px;width:1190px;height:792px;background:#fff"></div>
<svg class="r" style="left:0;top:0;font-family:'Liberation Sans',sans-serif" width="1658" height="1000" viewBox="0 0 1658 1000"><path d="M468.650 209V1001" stroke="#3c3c3c" stroke-width="1.500"/><path d="M468 210H1658" stroke="#6c6c6c" stroke-width="2"/><path d="M575 377H634" fill="none" stroke="#000" stroke-width="1.9" /><path d="M729 377H844.5" fill="none" stroke="#000" stroke-width="1.9" /><path d="M939.5 377H1086.5" fill="none" stroke="#000" stroke-width="1.9" /><path d="M1181.5 377H1249.5" fill="none" stroke="#000" stroke-width="1.9" /><path d="M1344.5 377H1391.5" fill="none" stroke="#000" stroke-width="1.9" /><path d="M634 377V392.5M729 377V392.5" fill="none" stroke="#000" stroke-width="1.9" /><path d="M634 380H729" fill="none" stroke="#000" stroke-width="1.8" /><path d="M681 371V398" fill="none" stroke="#000" stroke-width="1.2" /><text x="680.2" y="384.5" font-size="6.4" fill="#222" text-anchor="middle" transform="rotate(-90 680.2 384.5)">2500.00</text><text x="687.3" y="384.5" font-size="6.4" fill="#222" text-anchor="middle" transform="rotate(-90 687.3 384.5)">2200.00</text><path d="M844.5 377V392.5M939.5 377V392.5" fill="none" stroke="#000" stroke-width="1.9" /><path d="M844.5 380H939.5" fill="none" stroke="#000" stroke-width="1.8" /><path d="M892 371V398" fill="none" stroke="#000" stroke-width="1.2" /><text x="891.2" y="384.5" font-size="6.4" fill="#222" text-anchor="middle" transform="rotate(-90 891.2 384.5)">2500.00</text><text x="898.3" y="384.5" font-size="6.4" fill="#222" text-anchor="middle" transform="rotate(-90 898.3 384.5)">2200.00</text><path d="M1086.5 377V392.5M1181.5 377V392.5" fill="none" stroke="#000" stroke-width="1.9" /><path d="M1086.5 380H1181.5" fill="none" stroke="#000" stroke-width="1.8" /><path d="M1133.5 371V398" fill="none" stroke="#000" stroke-width="1.2" /><text x="1132.7" y="384.5" font-size="6.4" fill="#222" text-anchor="middle" transform="rotate(-90 1132.7 384.5)">2500.00</text><text x="1139.8" y="384.5" font-size="6.4" fill="#222" text-anchor="middle" transform="rotate(-90 1139.8 384.5)">2200.00</text><path d="M1249.5 377V392.5M1344.5 377V392.5" fill="none" stroke="#000" stroke-width="1.9" /><path d="M1249.5 380H1344.5" fill="none" stroke="#000" stroke-width="1.8" /><path d="M1297 371V398" fill="none" stroke="#000" stroke-width="1.2" /><text x="1296.2" y="384.5" font-size="6.4" fill="#222" text-anchor="middle" transform="rotate(-90 1296.2 384.5)">2500.00</text><text x="1303.3" y="384.5" font-size="6.4" fill="#222" text-anchor="middle" transform="rotate(-90 1303.3 384.5)">2200.00</text><path d="M575 377V935.500" fill="none" stroke="#000" stroke-width="1.9" /><path d="M1391.500 377V420.300H1436.500" fill="none" stroke="#000" stroke-width="1.9" /><path d="M844.5 392.5H780V655.8H954.9M985.9 655.8H994.5V392.5H939.5" fill="none" stroke="#000" stroke-width="1.9" /><path d="M1086.5 392.5H1002V655.8H1141.8M1172.7 655.8H1205.5V392.5H1181.5" fill="none" stroke="#000" stroke-width="1.9" /><path d="M1249.5 392.5H1213V655.8H1337.3M1366.9 655.8H1376V392.5H1344.5" fill="none" stroke="#000" stroke-width="1.9" /><path d="M634 392.5H590V713.500H688.600V655.8H722.500M752.300 655.8H772.500V392.5H729" fill="none" stroke="#000" stroke-width="1.9" /><path d="M696.400 762.600V663.8H721V655.8" fill="none" stroke="#000" stroke-width="1.9" /><path d="M753.800 655.8V663.8H953.400V655.8" fill="none" stroke="#000" stroke-width="1.9" /><path d="M987.400 655.8V663.8H1140.300V655.8" fill="none" stroke="#000" stroke-width="1.9" /><path d="M1174.200 655.8V663.8H1335.800V655.8" fill="none" stroke="#000" stroke-width="1.9" /><path d="M1368.400 655.8V663.700H1376.300V669.700H1391.500V551" fill="none" stroke="#000" stroke-width="1.9" /><path d="M721 657.700H753.8" fill="none" stroke="#000" stroke-width="2" /><rect x="721" y="656.400" width="2.200" height="2.400" fill="#fff" stroke="#000" stroke-width=".8"/><rect x="751.5999999999999" y="656.400" width="2.200" height="2.400" fill="#fff" stroke="#000" stroke-width=".8"/><path d="M738.4 646.600V673.200" fill="none" stroke="#000" stroke-width="1.2" /><text x="737.6" y="660" font-size="6.4" fill="#222" text-anchor="middle" transform="rotate(-90 737.6 660)">900.00</text><text x="744.6999999999999" y="660" font-size="6.4" fill="#222" text-anchor="middle" transform="rotate(-90 744.6999999999999 660)">2200.00</text><path d="M953.4 657.700H987.4" fill="none" stroke="#000" stroke-width="2" /><rect x="953.4" y="656.400" width="2.200" height="2.400" fill="#fff" stroke="#000" stroke-width=".8"/><rect x="985.1999999999999" y="656.400" width="2.200" height="2.400" fill="#fff" stroke="#000" stroke-width=".8"/><path d="M970.7 646.600V673.200" fill="none" stroke="#000" stroke-width="1.2" /><text x="969.9000000000001" y="660" font-size="6.4" fill="#222" text-anchor="middle" transform="rotate(-90 969.9000000000001 660)">900.00</text><text x="977.0" y="660" font-size="6.4" fill="#222" text-anchor="middle" transform="rotate(-90 977.0 660)">2200.00</text><path d="M1140.3 657.700H1174.2" fill="none" stroke="#000" stroke-width="2" /><rect x="1140.3" y="656.400" width="2.200" height="2.400" fill="#fff" stroke="#000" stroke-width=".8"/><rect x="1172.0" y="656.400" width="2.200" height="2.400" fill="#fff" stroke="#000" stroke-width=".8"/><path d="M1157.4 646.600V673.200" fill="none" stroke="#000" stroke-width="1.2" /><text x="1156.6000000000001" y="660" font-size="6.4" fill="#222" text-anchor="middle" transform="rotate(-90 1156.6000000000001 660)">900.00</text><text x="1163.7" y="660" font-size="6.4" fill="#222" text-anchor="middle" transform="rotate(-90 1163.7 660)">2200.00</text><path d="M1335.8 657.700H1368.4" fill="none" stroke="#000" stroke-width="2" /><rect x="1335.8" y="656.400" width="2.200" height="2.400" fill="#fff" stroke="#000" stroke-width=".8"/><rect x="1366.2" y="656.400" width="2.200" height="2.400" fill="#fff" stroke="#000" stroke-width=".8"/><path d="M1352 646.600V673.200" fill="none" stroke="#000" stroke-width="1.2" /><text x="1351.2" y="660" font-size="6.4" fill="#222" text-anchor="middle" transform="rotate(-90 1351.2 660)">900.00</text><text x="1358.3" y="660" font-size="6.4" fill="#222" text-anchor="middle" transform="rotate(-90 1358.3 660)">2200.00</text><path d="M1573.2 657.700H1606.2" fill="none" stroke="#000" stroke-width="2" /><rect x="1573.2" y="656.400" width="2.200" height="2.400" fill="#fff" stroke="#000" stroke-width=".8"/><rect x="1604.0" y="656.400" width="2.200" height="2.400" fill="#fff" stroke="#000" stroke-width=".8"/><path d="M1589.8 646.600V673.200" fill="none" stroke="#000" stroke-width="1.2" /><text x="1589.0" y="660" font-size="6.4" fill="#222" text-anchor="middle" transform="rotate(-90 1589.0 660)">900.00</text><text x="1596.1" y="660" font-size="6.4" fill="#222" text-anchor="middle" transform="rotate(-90 1596.1 660)">2200.00</text><path d="M696.400 762.6H723.900V770.2" fill="none" stroke="#000" stroke-width="1.9" /><path d="M757.200 770.2V762.6H952.400V770.2" fill="none" stroke="#000" stroke-width="1.9" /><path d="M985.700 770.2V762.6H1138.900V770.2" fill="none" stroke="#000" stroke-width="1.9" /><path d="M1172.600 770.2V762.6H1334.700V770.2" fill="none" stroke="#000" stroke-width="1.9" /><path d="M1368.400 770.2V762.6H1444.500V778H1391.500V935.5" fill="none" stroke="#000" stroke-width="1.9" /><path d="M590 920.3V720.700H688.600V770.2H723.900" fill="none" stroke="#000" stroke-width="1.9" /><path d="M757.200 770.2H772.500V920.3H590" fill="none" stroke="#000" stroke-width="1.9" /><path d="M952.4 770.2H780V920.3H994.5V770.2H985.7" fill="none" stroke="#000" stroke-width="1.9" /><path d="M1138.9 770.2H1002V920.3H1205.5V770.2H1172.6" fill="none" stroke="#000" stroke-width="1.9" /><path d="M1334.7 770.2H1213V920.3H1376.3V770.2H1368.4" fill="none" stroke="#000" stroke-width="1.9" /><path d="M575 935.5H1391.500" fill="none" stroke="#000" stroke-width="1.9" /><rect x="730.2" y="920.3" width="22.299999999999955" height="17.700" fill="#fff" stroke="#000" stroke-width="1.400"/><path d="M730.2 926.800H752.5" fill="none" stroke="#000" stroke-width="0.8" /><path d="M730.2 928.900H752.5" fill="none" stroke="#000" stroke-width="1.6" /><path d="M741.5 920.3V962" fill="none" stroke="#000" stroke-width="1.1" /><text x="741.5" y="916.6" font-size="6.4" fill="#222" text-anchor="middle">1500.00</text><text x="740.7" y="949.5" font-size="6.4" fill="#222" text-anchor="middle" transform="rotate(-90 740.7 949.5)">600.00</text><text x="747.8" y="949.5" font-size="6.4" fill="#222" text-anchor="middle" transform="rotate(-90 747.8 949.5)">600.00</text><rect x="958" y="920.3" width="22.700000000000045" height="17.700" fill="#fff" stroke="#000" stroke-width="1.400"/><path d="M958 926.800H980.7" fill="none" stroke="#000" stroke-width="0.8" /><path d="M958 928.900H980.7" fill="none" stroke="#000" stroke-width="1.6" /><path d="M969.7 920.3V962" fill="none" stroke="#000" stroke-width="1.1" /><text x="969.7" y="916.6" font-size="6.4" fill="#222" text-anchor="middle">1500.00</text><text x="968.9000000000001" y="949.5" font-size="6.4" fill="#222" text-anchor="middle" transform="rotate(-90 968.9000000000001 949.5)">600.00</text><text x="976.0" y="949.5" font-size="6.4" fill="#222" text-anchor="middle" transform="rotate(-90 976.0 949.5)">600.00</text><rect x="1146.6" y="920.3" width="22.700000000000045" height="17.700" fill="#fff" stroke="#000" stroke-width="1.400"/><path d="M1146.6 926.800H1169.3" fill="none" stroke="#000" stroke-width="0.8" /><path d="M1146.6 928.900H1169.3" fill="none" stroke="#000" stroke-width="1.6" /><path d="M1157.7 920.3V962" fill="none" stroke="#000" stroke-width="1.1" /><text x="1157.7" y="916.6" font-size="6.4" fill="#222" text-anchor="middle">1500.00</text><text x="1156.9" y="949.5" font-size="6.4" fill="#222" text-anchor="middle" transform="rotate(-90 1156.9 949.5)">600.00</text><text x="1164.0" y="949.5" font-size="6.4" fill="#222" text-anchor="middle" transform="rotate(-90 1164.0 949.5)">600.00</text><rect x="1341.3" y="920.3" width="23.0" height="17.700" fill="#fff" stroke="#000" stroke-width="1.400"/><path d="M1341.3 926.800H1364.3" fill="none" stroke="#000" stroke-width="0.8" /><path d="M1341.3 928.900H1364.3" fill="none" stroke="#000" stroke-width="1.6" /><path d="M1352.3 920.3V962" fill="none" stroke="#000" stroke-width="1.1" /><text x="1352.3" y="916.6" font-size="6.4" fill="#222" text-anchor="middle">1500.00</text><text x="1351.5" y="949.5" font-size="6.4" fill="#222" text-anchor="middle" transform="rotate(-90 1351.5 949.5)">600.00</text><text x="1358.6" y="949.5" font-size="6.4" fill="#222" text-anchor="middle" transform="rotate(-90 1358.6 949.5)">600.00</text><rect x="1578.4" y="920.3" width="22.799999999999955" height="17.700" fill="#fff" stroke="#000" stroke-width="1.400"/><path d="M1578.4 926.800H1601.2" fill="none" stroke="#000" stroke-width="0.8" /><path d="M1578.4 928.900H1601.2" fill="none" stroke="#000" stroke-width="1.6" /><path d="M1589.5 920.3V962" fill="none" stroke="#000" stroke-width="1.1" /><text x="1589.5" y="916.6" font-size="6.4" fill="#222" text-anchor="middle">1500.00</text><text x="1588.7" y="949.5" font-size="6.4" fill="#222" text-anchor="middle" transform="rotate(-90 1588.7 949.5)">600.00</text><text x="1595.8" y="949.5" font-size="6.4" fill="#222" text-anchor="middle" transform="rotate(-90 1595.8 949.5)">600.00</text><path d="M952.4 768.600H985.7" fill="none" stroke="#000" stroke-width="2" /><rect x="952.4" y="767.400" width="2.200" height="2.400" fill="#fff" stroke="#000" stroke-width=".8"/><rect x="983.5" y="767.400" width="2.200" height="2.400" fill="#fff" stroke="#000" stroke-width=".8"/><path d="M969 752V779" fill="none" stroke="#000" stroke-width="1.2" /><text x="968.2" y="766" font-size="6.4" fill="#222" text-anchor="middle" transform="rotate(-90 968.2 766)">900.00</text><text x="975.3" y="766" font-size="6.4" fill="#222" text-anchor="middle" transform="rotate(-90 975.3 766)">2200.00</text><path d="M1138.9 768.600H1172.6" fill="none" stroke="#000" stroke-width="2" /><rect x="1138.9" y="767.400" width="2.200" height="2.400" fill="#fff" stroke="#000" stroke-width=".8"/><rect x="1170.3999999999999" y="767.400" width="2.200" height="2.400" fill="#fff" stroke="#000" stroke-width=".8"/><path d="M1156 752V779" fill="none" stroke="#000" stroke-width="1.2" /><text x="1155.2" y="766" font-size="6.4" fill="#222" text-anchor="middle" transform="rotate(-90 1155.2 766)">900.00</text><text x="1162.3" y="766" font-size="6.4" fill="#222" text-anchor="middle" transform="rotate(-90 1162.3 766)">2200.00</text><path d="M1334.7 768.600H1368.4" fill="none" stroke="#000" stroke-width="2" /><rect x="1334.7" y="767.400" width="2.200" height="2.400" fill="#fff" stroke="#000" stroke-width=".8"/><rect x="1366.2" y="767.400" width="2.200" height="2.400" fill="#fff" stroke="#000" stroke-width=".8"/><path d="M1351.5 752V779" fill="none" stroke="#000" stroke-width="1.2" /><text x="1350.7" y="766" font-size="6.4" fill="#222" text-anchor="middle" transform="rotate(-90 1350.7 766)">900.00</text><text x="1357.8" y="766" font-size="6.4" fill="#222" text-anchor="middle" transform="rotate(-90 1357.8 766)">2200.00</text><path d="M1573.8 768.600H1607.3" fill="none" stroke="#000" stroke-width="2" /><rect x="1573.8" y="767.400" width="2.200" height="2.400" fill="#fff" stroke="#000" stroke-width=".8"/><rect x="1605.1" y="767.400" width="2.200" height="2.400" fill="#fff" stroke="#000" stroke-width=".8"/><path d="M1590.2 752V779" fill="none" stroke="#000" stroke-width="1.2" /><text x="1589.4" y="766" font-size="6.4" fill="#222" text-anchor="middle" transform="rotate(-90 1589.4 766)">900.00</text><text x="1596.5" y="766" font-size="6.4" fill="#222" text-anchor="middle" transform="rotate(-90 1596.5 766)">2200.00</text><path d="M1470.800 757V782.500" fill="none" stroke="#000" stroke-width="1.2" /><text x="1470" y="769.5" font-size="6.4" fill="#222" text-anchor="middle" transform="rotate(-90 1470 769.5)">1600.00</text><text x="1477.1" y="769.5" font-size="6.4" fill="#222" text-anchor="middle" transform="rotate(-90 1477.1 769.5)">2200.00</text><path d="M1658 380H1597.700" fill="none" stroke="#000" stroke-width="1.6" /><path d="M1597.700 377H1551V669.700H1565.700V663.700H1573.200V655.8" fill="none" stroke="#000" stroke-width="1.9" /><path d="M1597.700 377V392.5H1565.700V655.8H1574.700" fill="none" stroke="#000" stroke-width="1.9" /><path d="M1604.700 655.8H1658M1606.200 655.8V663.8H1658" fill="none" stroke="#000" stroke-width="1.9" /><path d="M1645.400 371V398" fill="none" stroke="#000" stroke-width="1.2" /><text x="1644.6" y="384.5" font-size="6.4" fill="#222" text-anchor="middle" transform="rotate(-90 1644.6 384.5)">2500.00</text><text x="1651.7" y="384.5" font-size="6.4" fill="#222" text-anchor="middle" transform="rotate(-90 1651.7 384.5)">2200.00</text><path d="M1497.400 762.6H1573.800V770.2M1497.400 762.6V778H1551V935.5H1658" fill="none" stroke="#000" stroke-width="1.9" /><path d="M1573.800 770.2H1565.700V920.3H1658" fill="none" stroke="#000" stroke-width="1.9" /><path d="M1607.300 770.2V762.6H1658M1607.300 770.2H1658" fill="none" stroke="#000" stroke-width="1.9" /><path d="M1436.500 420.300H1504.800" fill="none" stroke="#000" stroke-width="1" /><path d="M1436.500 427.600H1504.800" fill="none" stroke="#000" stroke-width="2.2" /><path d="M1436.500 420.300V435.400M1504.800 420.300V572.900H1551" fill="none" stroke="#000" stroke-width="1.9" /><path d="M1436.500 435.400H1551M1504.800 420.300H1551" fill="none" stroke="#000" stroke-width="1.9" /><path d="M1470.900 394.400V435.400" fill="none" stroke="#000" stroke-width="1.2" /><text x="1470.1" y="408" font-size="6.4" fill="#222" text-anchor="middle" transform="rotate(-90 1470.1 408)">2900.00</text><text x="1472.5" y="408" font-size="6.4" fill="#222" text-anchor="middle" transform="rotate(90 1472.5 408)">1800.00</text><path d="M1504.800 481.3H1551" fill="none" stroke="#000" stroke-width="1.9" /><path d="M1504.800 493H1551" fill="none" stroke="#000" stroke-width="1.9" /><path d="M1504.800 504.6H1551" fill="none" stroke="#000" stroke-width="1.9" /><path d="M1504.800 515.9H1551" fill="none" stroke="#000" stroke-width="1.9" /><path d="M1504.800 527.4H1551" fill="none" stroke="#000" stroke-width="1.9" /><path d="M1504.800 538.5H1551" fill="none" stroke="#000" stroke-width="1.9" /><path d="M1504.800 550H1551" fill="none" stroke="#000" stroke-width="1.9" /><path d="M1504.800 561.3H1551" fill="none" stroke="#000" stroke-width="1.9" /><path d="M1482.600 481.300H1504.800" fill="none" stroke="#000" stroke-width="1.9" /><path d="M1391.500 435.400H1436.500M1391.500 435.400V550H1436.500V435.400M1391.500 481.300H1482.600V437" fill="none" stroke="#222" stroke-width="1.1" stroke-dasharray="1.200 1.600"/><path d="M1448 437V481.300" fill="none" stroke="#222" stroke-width="1.1" stroke-dasharray="1.200 1.600"/><path d="M1459.8 437V481.300" fill="none" stroke="#222" stroke-width="1.1" stroke-dasharray="1.200 1.600"/><path d="M1471.3 437V481.300" fill="none" stroke="#222" stroke-width="1.1" stroke-dasharray="1.200 1.600"/><path d="M1391.500 493H1436.500" fill="none" stroke="#222" stroke-width="1.1" stroke-dasharray="1.600 1.400"/><path d="M1391.500 504.6H1436.500" fill="none" stroke="#222" stroke-width="1.1" stroke-dasharray="1.600 1.400"/><path d="M1391.500 515.9H1436.500" fill="none" stroke="#222" stroke-width="1.1" stroke-dasharray="1.600 1.400"/><path d="M1391.500 527.4H1436.500" fill="none" stroke="#222" stroke-width="1.1" stroke-dasharray="1.600 1.400"/><path d="M1391.500 538.5H1436.500" fill="none" stroke="#222" stroke-width="1.1" stroke-dasharray="1.600 1.400"/><path d="M1484.200 435.400L1494.200 469M1494.200 435.400V468.600" fill="none" stroke="#000" stroke-width="1.3" /><path d="M1494.200 469L1497 479.700" fill="none" stroke="#000" stroke-width="1.3" stroke-dasharray="3 2"/><text x="1470.5" y="443.6" font-size="6.4" fill="#222" text-anchor="middle">640.00</text><path d="M1456 542.300H1444.300V488.600H1497.900V542.300H1486.800" fill="none" stroke="#000" stroke-width="1.9" /><path d="M1456 542.300V550H1436.500M1486.800 542.300V550H1504.800" fill="none" stroke="#000" stroke-width="1.9" /><path d="M1453.800 542.300V550M1489 542.300V550" fill="none" stroke="#000" stroke-width="1" /><path d="M1456 546.300H1486.800" fill="none" stroke="#000" stroke-width="2" /><path d="M1471.500 533V559" fill="none" stroke="#000" stroke-width="1.2" /><text x="1470.7" y="546" font-size="6.4" fill="#222" text-anchor="middle" transform="rotate(-90 1470.7 546)">900.00</text><text x="1473.1" y="546" font-size="6.4" fill="#222" text-anchor="middle" transform="rotate(90 1473.1 546)">2200.00</text><path d="M772.500 392.5H590V713.500H690.500" fill="none" stroke="#2b85a8" stroke-width="2.9" stroke-dasharray="11.350 11.350"/><path d="M690.500 713.500V657" fill="none" stroke="#2b85a8" stroke-width="2.9" stroke-dasharray="11.350 11.350"/><path d="M689 656.300H720.500" fill="none" stroke="#2b85a8" stroke-width="2.9" /><path d="M772.500 393.600V656.300H753.800" fill="none" stroke="#2b85a8" stroke-width="2.9" stroke-dasharray="12 11"/><path d="M735 656.300H746" fill="none" stroke="#2b85a8" stroke-width="2.9" /><path d="M723.900 768.600H757.200" fill="none" stroke="#4aa81e" stroke-width="2" /><rect x="723.900" y="767.200" width="2.400" height="2.800" fill="#fff" stroke="#4aa81e" stroke-width=".9"/><rect x="754.800" y="767.200" width="2.400" height="2.800" fill="#fff" stroke="#4aa81e" stroke-width=".9"/><text x="740.1" y="766" font-size="6.4" fill="#5ab030" text-anchor="middle" transform="rotate(-90 740.1 766)">900.00</text><text x="747.2" y="766" font-size="6.4" fill="#5ab030" text-anchor="middle" transform="rotate(-90 747.2 766)">2200.00</text><path d="M741 748V779.700" fill="none" stroke="#6ea6ea" stroke-width="1.3" /><circle cx="741" cy="766.400" r="4.500" fill="#62a0e6" stroke="#4a86d0" stroke-width=".6"/><path d="M739.200 750.600V758L733 754.300Z" fill="#7ab0ee"/><path d="M743 750.600V758L749.200 754.300Z" fill="#1a1008"/><path d="M317.600 590L297.200 616.400H338.400Z" fill="#000"/><circle cx="317.600" cy="617" r="14.800" fill="#d5d4d5" stroke="#000" stroke-width="1.400"/><path d="M338.400 616.400H348" stroke="#000" stroke-width="1.200"/><text x="317.600" y="623" font-size="17.300" font-weight="700" text-anchor="middle" fill="#000">A</text></svg>
<span class="t" style="left:900.0px;top:979.0px;font-size:11.5px;color:#111;letter-spacing:0.03px;">Modificare object: Porta</span>
<div class="r" style="left:1650px;top:149px;width:8px;height:851px;background:linear-gradient(90deg,rgba(90,90,100,0),rgba(90,90,100,.22))"></div>
<div class="r" style="left:1658px;top:149px;width:231px;height:852px;background:#ffffff;"></div>
<div class="r" style="left:1889px;top:149px;width:32px;height:852px;background:#f1f0f6;"></div>
<div class="r" style="left:1888px;top:149px;width:1px;height:852px;background:#d6d6e6;"></div>
<div class="r" style="left:1890px;top:149px;width:31px;height:89px;background:#cdeeee;"></div>
<div class="r" style="left:1658px;top:145px;width:263px;height:6px;background:linear-gradient(#c9dea2,#dbe8c4 40%,rgba(255,255,255,0))"></div>
<span class="t" style="left:1910.4px;top:229.7px;font-size:14.5px;color:#2a2a2a;transform-origin:0 0;transform:rotate(-90deg) translateY(-12.3px);letter-spacing:-0.87px;">Proprietà</span>
<svg class="r" style="left:1896px;top:152px;" width="20" height="20" viewBox="0 0 20 20"><path d="M5.200 2.400H13.400V10.600" fill="none" stroke="#3a3a3c" stroke-width="1.500"/><rect x="2" y="4.200" width="9.600" height="9.600" rx="1" fill="#3a3a3c"/><path d="M16.400 5V12.600M15.200 6.400L16.400 4.800L17.600 6.400M15.200 11.200L16.400 12.800L17.600 11.200M3 16.400H10.600M4.400 15.200L2.800 16.400L4.400 17.600M9.200 15.200L10.800 16.400L9.200 17.600" fill="none" stroke="#555" stroke-width=".8"/></svg>
<svg class="r" style="left:1663px;top:152px;" width="20" height="20" viewBox="0 0 20 20"><circle cx="9.800" cy="9.800" r="8.600" fill="none" stroke="#9a9aa2" stroke-width="1.400" stroke-dasharray=".9 .7"/><circle cx="9.800" cy="9.800" r="5.800" fill="none" stroke="#555" stroke-width=".9"/><circle cx="9.800" cy="8.800" r="1.900" fill="none" stroke="#555" stroke-width=".9"/><path d="M9.800 4V6.900M8.200 9.800L5 13M11.400 9.800L14.600 13" stroke="#555" stroke-width=".9"/></svg>
<span class="t" style="left:1687.4px;top:153.0px;font-size:14px;color:#555;letter-spacing:-0.49px;">Salva come default</span>
<span class="t" style="left:1668.5px;top:184.0px;font-size:13.5px;color:#3a3a3a;font-weight:700;letter-spacing:0.44px;">Door #9</span>
<div class="r" style="left:1658px;top:205px;width:231px;height:1px;background:#ececf2;"></div>
<div class="r" style="left:1659px;top:207px;width:188.500px;height:68px;background:#f6f5fb;border:1px solid #d9d9e6;border-radius:3px"></div>
<svg class="r" style="left:1662px;top:210px;" width="64" height="64" viewBox="0 0 64 64"><defs><linearGradient id="dt1" x1="0" y1="0" x2="0" y2="1"><stop offset="0" stop-color="#bdbdbd"/><stop offset=".7" stop-color="#c6c6c6"/><stop offset="1" stop-color="#dedede"/></linearGradient></defs>
<rect width="64" height="64" fill="#b9b9b9"/><path d="M0 64V48L64 37V64Z" fill="url(#dt1)"/><path d="M0 7L22 0H28L0 12Z" fill="#cfcfcf"/><path d="M0 12L28 0" stroke="#8f8f8f" stroke-width=".6"/><path d="M0 7L22 0" stroke="#9a9a9a" stroke-width=".5"/>
<path d="M43 52L64 39.500V64H20L26 58" fill="none"/><path d="M20 64L26 58.500M43 52L64 39.500" stroke="#8f8f8f" stroke-width=".7"/>
<path d="M25.400 14.400L40.600 5.800L43 6.600V52L40.400 51.400L26.600 58.800L25.400 58Z" fill="#a9a9a9" stroke="#8c8c8c" stroke-width=".5"/>
<path d="M25.800 15L39.800 7V50.600L25.800 57.800Z" fill="#233b66"/><path d="M39.800 7L41 7.400V51L39.800 50.600Z" fill="#555"/><circle cx="40.400" cy="28.400" r="1.100" fill="#111"/></svg>
<span class="t" style="left:1732.1px;top:227.0px;font-size:12px;color:#2c2c2c;">Porta Interna</span>
<span class="t" style="left:1732.1px;top:243.0px;font-size:12px;color:#2c2c2c;letter-spacing:-0.39px;">0.90*2.20</span>
<svg class="r" style="left:1834px;top:239px;" width="10" height="6" viewBox="0 0 10 6"><path d="M0 0H9.600L4.800 5.800Z" fill="#555"/></svg>
<svg class="r" style="left:1858px;top:207.2px;" width="19" height="19" viewBox="0 0 19 19"><path d="M9.500 .8L11.700 7.300H18.500L13 11.300L15.100 17.800L9.500 13.800L3.900 17.800L6 11.300L.5 7.300H7.300Z" fill="#666"/></svg>
<svg class="r" style="left:1858px;top:233px;" width="18" height="16" viewBox="0 0 18 16"><path d="M2 14.600L3.400 10.600L12.600 2.600Q13.600 2 14.600 2.800L15.600 4Q16.200 5 15.400 5.800L6 13.400Z" fill="#fff" stroke="#8cc03c" stroke-width="1.100" stroke-linejoin="round"/><path d="M4.600 11.400L13.600 3.600M5.800 12.600L14.800 4.800M3.400 10.600L6 13.400" stroke="#8cc03c" stroke-width=".9" fill="none"/><path d="M2 14.600L2.900 12L4.400 13.700Z" fill="#8cc03c"/></svg>
<svg class="r" style="left:1860px;top:258px;" width="14" height="14" viewBox="0 0 14 14"><path d="M1 1L13 13M13 1L1 13" stroke="#e2492b" stroke-width="1.400"/></svg>
<div class="r" style="left:1658px;top:276.5px;width:230px;height:1.0px;background:#ececf2;"></div>
<div class="r" style="left:1658px;top:300.5px;width:230px;height:1.0px;background:#ececf2;"></div>
<div class="r" style="left:1773.5px;top:277.5px;width:1.0px;height:23.0px;background:#ececf2;"></div>
<span class="t" style="left:1668.3px;top:283.0px;font-size:12px;color:#2c2c2c;letter-spacing:0.18px;">Allineamento</span>
<div class="r" style="left:1775px;top:278.5px;width:111px;height:19.500px;background:#f6f5fb;border:1px solid #d9d9e6;border-radius:3px"></div>
<span class="t" style="left:1779.3px;top:283.0px;font-size:12px;color:#2c2c2c;letter-spacing:0.16px;">Interna</span>
<svg class="r" style="left:1868px;top:286.5px;" width="10" height="6" viewBox="0 0 10 6"><path d="M0 0H9.600L4.800 5.800Z" fill="#555"/></svg>
<div class="r" style="left:1658px;top:324.5px;width:230px;height:1.0px;background:#ececf2;"></div>
<div class="r" style="left:1773.5px;top:301.5px;width:1.0px;height:23.0px;background:#ececf2;"></div>
<span class="t" style="left:1668.3px;top:307.0px;font-size:12px;color:#2c2c2c;letter-spacing:-0.02px;">Offset</span>
<span class="t" style="left:1782.2px;top:307.0px;font-size:12px;color:#2c2c2c;letter-spacing:-0.52px;">0.00</span>
<span class="t" style="left:1860.5px;top:307.0px;font-size:12px;color:#2c2c2c;letter-spacing:-1.20px;">mm</span>
<div class="r" style="left:1659px;top:327px;width:188.500px;height:67.500px;background:#f6f5fb;border:1px solid #d9d9e6;border-radius:3px"></div>
<svg class="r" style="left:1662px;top:330px;" width="64" height="64" viewBox="0 0 64 64"><rect width="64" height="64" fill="#ececee"/><path d="M0 64V50L64 38V64Z" fill="#f2f2f3"/><path d="M0 8L40 0M0 14L44 0M18 64L64 40" stroke="#dcdcde" stroke-width=".8"/><path d="M23 18.500L43.800 12V42.500L23 50Z" fill="#f6f6f6" stroke="#d6d6d8" stroke-width="1"/><path d="M25.200 20.400L41.600 15V40.600L25.200 46.600Z" fill="#f1f1f2" stroke="#dedee0" stroke-width=".8"/></svg>
<span class="t" style="left:1732.1px;top:355.0px;font-size:12px;color:#2c2c2c;letter-spacing:-0.03px;">Empty</span>
<svg class="r" style="left:1834px;top:359px;" width="10" height="6" viewBox="0 0 10 6"><path d="M0 0H9.600L4.800 5.800Z" fill="#555"/></svg>
<svg class="r" style="left:1858px;top:327.2px;" width="19" height="19" viewBox="0 0 19 19"><path d="M9.500 .8L11.700 7.300H18.500L13 11.300L15.100 17.800L9.500 13.800L3.900 17.800L6 11.300L.5 7.300H7.300Z" fill="#c9c9cc"/></svg>
<svg class="r" style="left:1858px;top:353px;" width="18" height="16" viewBox="0 0 18 16"><path d="M2 14.600L3.400 10.600L12.600 2.600Q13.600 2 14.600 2.800L15.600 4Q16.200 5 15.400 5.800L6 13.400Z" fill="#fff" stroke="#8cc03c" stroke-width="1.100" stroke-linejoin="round"/><path d="M4.600 11.400L13.600 3.600M5.800 12.600L14.800 4.800M3.400 10.600L6 13.400" stroke="#8cc03c" stroke-width=".9" fill="none"/><path d="M2 14.600L2.900 12L4.400 13.700Z" fill="#8cc03c"/></svg>
<svg class="r" style="left:1860px;top:378px;" width="14" height="14" viewBox="0 0 14 14"><path d="M1 1L13 13M13 1L1 13" stroke="#c4c4c8" stroke-width="1.400"/></svg>
<div class="r" style="left:1658px;top:396px;width:230px;height:1px;background:#ececf2;"></div>
<div class="r" style="left:1658px;top:414.5px;width:230px;height:1.0px;background:#ececf2;"></div>
<div class="r" style="left:1658px;top:438.5px;width:230px;height:1.0px;background:#ececf2;"></div>
<div class="r" style="left:1773.5px;top:415.5px;width:1.0px;height:23.0px;background:#ececf2;"></div>
<span class="t" style="left:1668.3px;top:421.0px;font-size:12px;color:#b4b4bc;letter-spacing:0.07px;">Profondità</span>
<span class="t" style="left:1782.2px;top:421.0px;font-size:12px;color:#b4b4bc;letter-spacing:-0.52px;">0.00</span>
<span class="t" style="left:1860.5px;top:421.0px;font-size:12px;color:#b4b4bc;letter-spacing:-1.20px;">mm</span>
<div class="r" style="left:1658px;top:462.5px;width:230px;height:1.0px;background:#ececf2;"></div>
<div class="r" style="left:1773.5px;top:439.5px;width:1.0px;height:23.0px;background:#ececf2;"></div>
<span class="t" style="left:1668.3px;top:445.0px;font-size:12px;color:#2c2c2c;letter-spacing:0.19px;">Orientamento vista</span>
<div class="r" style="left:1775px;top:440.5px;width:111px;height:19.500px;background:#f6f5fb;border:1px solid #d9d9e6;border-radius:3px"></div>
<span class="t" style="left:1779.3px;top:445.0px;font-size:12px;color:#2c2c2c;letter-spacing:-0.19px;">Sinistra</span>
<svg class="r" style="left:1868px;top:448.5px;" width="10" height="6" viewBox="0 0 10 6"><path d="M0 0H9.600L4.800 5.800Z" fill="#555"/></svg>
<div class="r" style="left:1658px;top:486.5px;width:230px;height:1.0px;background:#ececf2;"></div>
<div class="r" style="left:1773.5px;top:463.5px;width:1.0px;height:23.0px;background:#ececf2;"></div>
<span class="t" style="left:1668.3px;top:469.0px;font-size:12px;color:#2c2c2c;letter-spacing:-0.20px;">Fronte</span>
<div class="r" style="left:1775px;top:464.5px;width:111px;height:19.500px;background:#f6f5fb;border:1px solid #d9d9e6;border-radius:3px"></div>
<span class="t" style="left:1779.3px;top:469.0px;font-size:12px;color:#2c2c2c;letter-spacing:0.16px;">Interna</span>
<svg class="r" style="left:1868px;top:472.5px;" width="10" height="6" viewBox="0 0 10 6"><path d="M0 0H9.600L4.800 5.800Z" fill="#555"/></svg>
<div class="r" style="left:1658px;top:510.5px;width:230px;height:1.0px;background:#ececf2;"></div>
<div class="r" style="left:1773.5px;top:487.5px;width:1.0px;height:23.0px;background:#ececf2;"></div>
<span class="t" style="left:1668.3px;top:493.0px;font-size:12px;color:#2c2c2c;letter-spacing:0.04px;">Segui muro</span>
<div class="r" style="left:1817.500px;top:489.500px;width:17.500px;height:17.500px;background:#fff;border:1px solid #d2d2dc;border-radius:4px"></div>
<div class="r" style="left:1658px;top:511.5px;width:230px;height:24.0px;background:#f1f0f6;"></div>
<div class="r" style="left:1658px;top:534.5px;width:230px;height:1.5px;background:#f7f6fb;"></div>
<svg class="r" style="left:1661.5px;top:521.0px;" width="9" height="6" viewBox="0 0 9 6"><path d="M0 0H8.400L4.200 5.200Z" fill="#444"/></svg>
<span class="t" style="left:1674.1px;top:518.0px;font-size:11.5px;color:#222;letter-spacing:0.37px;-webkit-text-stroke:.18px #222;">Vincoli</span>
<div class="r" style="left:1658px;top:535px;width:8px;height:24px;background:#f1f0f6;"></div>
<div class="r" style="left:1666px;top:558.5px;width:222px;height:1.0px;background:#ececf2;"></div>
<div class="r" style="left:1773.5px;top:535.5px;width:1.0px;height:23.0px;background:#ececf2;"></div>
<span class="t" style="left:1668.3px;top:541.0px;font-size:12px;color:#b4b4bc;letter-spacing:0.11px;">Vincolo di base</span>
<span class="t" style="left:1784.1px;top:540.0px;font-size:12px;color:#b4b4bc;letter-spacing:-0.09px;">Ground Floor</span>
<div class="r" style="left:1658px;top:559px;width:8px;height:24px;background:#f1f0f6;"></div>
<div class="r" style="left:1666px;top:582.5px;width:222px;height:1.0px;background:#ececf2;"></div>
<div class="r" style="left:1773.5px;top:559.5px;width:1.0px;height:23.0px;background:#ececf2;"></div>
<span class="t" style="left:1668.3px;top:565.0px;font-size:12px;color:#2c2c2c;letter-spacing:0.05px;">Offset base</span>
<span class="t" style="left:1782.2px;top:565.0px;font-size:12px;color:#2c2c2c;letter-spacing:-0.52px;">0.00</span>
<span class="t" style="left:1860.5px;top:565.0px;font-size:12px;color:#2c2c2c;letter-spacing:-1.20px;">mm</span>
<div class="r" style="left:1658px;top:583.5px;width:230px;height:24.0px;background:#f1f0f6;"></div>
<div class="r" style="left:1658px;top:606.5px;width:230px;height:1.5px;background:#f7f6fb;"></div>
<svg class="r" style="left:1661.5px;top:593.0px;" width="9" height="6" viewBox="0 0 9 6"><path d="M0 0H8.400L4.200 5.200Z" fill="#444"/></svg>
<span class="t" style="left:1674.1px;top:590.0px;font-size:11.5px;color:#222;letter-spacing:0.48px;-webkit-text-stroke:.18px #222;">Vincoli apertura</span>
<div class="r" style="left:1658px;top:607px;width:230px;height:24px;background:#f1f0f6;"></div>
<div class="r" style="left:1666px;top:630.5px;width:222px;height:1.0px;background:#f7f6fb;"></div>
<span class="t" style="left:1668.3px;top:613.0px;font-size:12px;color:#222;letter-spacing:-0.10px;">Sinistra</span>
<div class="r" style="left:1736px;top:610px;width:18px;height:18px;background:#1470b4;border-radius:3.500px"></div>
<svg class="r" style="left:1736px;top:610px;" width="18" height="18" viewBox="0 0 18 18"><path d="M3.600 9.200L7.400 12.800L14.400 4.800" fill="none" stroke="#fff" stroke-width="1.700"/></svg>
<span class="t" style="left:1763.2px;top:613.0px;font-size:12px;color:#222;letter-spacing:0.21px;">Uniforma tutti i lati</span>
<div class="r" style="left:1658px;top:631px;width:8px;height:24px;background:#f1f0f6;"></div>
<div class="r" style="left:1666px;top:654.5px;width:222px;height:1.0px;background:#ececf2;"></div>
<div class="r" style="left:1773.5px;top:631.5px;width:1.0px;height:23.0px;background:#ececf2;"></div>
<span class="t" style="left:1668.3px;top:637.0px;font-size:12px;color:#2c2c2c;letter-spacing:0.10px;">Angolo posteriore</span>
<span class="t" style="left:1782.2px;top:637.0px;font-size:12px;color:#2c2c2c;letter-spacing:-0.52px;">0.00</span>
<span class="t" style="left:1859.0px;top:637.0px;font-size:12px;color:#2c2c2c;letter-spacing:-0.27px;">deg</span>
<div class="r" style="left:1658px;top:655px;width:8px;height:24px;background:#f1f0f6;"></div>
<div class="r" style="left:1666px;top:678.5px;width:222px;height:1.0px;background:#ececf2;"></div>
<div class="r" style="left:1773.5px;top:655.5px;width:1.0px;height:23.0px;background:#ececf2;"></div>
<span class="t" style="left:1668.3px;top:661.0px;font-size:12px;color:#2c2c2c;letter-spacing:0.08px;">Offset posteriore</span>
<span class="t" style="left:1782.2px;top:661.0px;font-size:12px;color:#2c2c2c;letter-spacing:-0.52px;">0.00</span>
<span class="t" style="left:1860.5px;top:661.0px;font-size:12px;color:#2c2c2c;letter-spacing:-1.20px;">mm</span>
<div class="r" style="left:1658px;top:679px;width:8px;height:24px;background:#f1f0f6;"></div>
<div class="r" style="left:1666px;top:702.5px;width:222px;height:1.0px;background:#ececf2;"></div>
<div class="r" style="left:1773.5px;top:679.5px;width:1.0px;height:23.0px;background:#ececf2;"></div>
<span class="t" style="left:1668.3px;top:685.0px;font-size:12px;color:#2c2c2c;letter-spacing:0.11px;">Offset frontale</span>
<span class="t" style="left:1782.2px;top:685.0px;font-size:12px;color:#2c2c2c;letter-spacing:-0.52px;">0.00</span>
<span class="t" style="left:1860.5px;top:685.0px;font-size:12px;color:#2c2c2c;letter-spacing:-1.20px;">mm</span>
<div class="r" style="left:1658px;top:703px;width:230px;height:244px;background:#f1f0f6;"></div>
<span class="t" style="left:1662.3px;top:719.0px;font-size:12.5px;color:#222;font-weight:700;letter-spacing:-0.05px;">Rivestimenti e finiture</span>
<div class="r" style="left:1658px;top:737.5px;width:230px;height:24.0px;background:#f1f0f6;"></div>
<div class="r" style="left:1658px;top:760.5px;width:230px;height:1.5px;background:#f7f6fb;"></div>
<svg class="r" style="left:1663px;top:745.0px;" width="6" height="9" viewBox="0 0 6 9"><path d="M0 0V8.800L5 4.400Z" fill="#555"/></svg>
<span class="t" style="left:1674.1px;top:744.0px;font-size:11.5px;color:#222;letter-spacing:0.27px;-webkit-text-stroke:.18px #222;">Soglia</span>
<div class="r" style="left:1658px;top:761.5px;width:230px;height:24.0px;background:#f1f0f6;"></div>
<div class="r" style="left:1658px;top:784.5px;width:230px;height:1.5px;background:#f7f6fb;"></div>
<svg class="r" style="left:1663px;top:769.0px;" width="6" height="9" viewBox="0 0 6 9"><path d="M0 0V8.800L5 4.400Z" fill="#555"/></svg>
<span class="t" style="left:1674.1px;top:768.0px;font-size:11.5px;color:#222;letter-spacing:0.33px;-webkit-text-stroke:.18px #222;">Torello</span>
<div class="r" style="left:1658px;top:785.5px;width:230px;height:24.0px;background:#f1f0f6;"></div>
<div class="r" style="left:1658px;top:808.5px;width:230px;height:1.5px;background:#f7f6fb;"></div>
<svg class="r" style="left:1663px;top:793.0px;" width="6" height="9" viewBox="0 0 6 9"><path d="M0 0V8.800L5 4.400Z" fill="#555"/></svg>
<span class="t" style="left:1674.1px;top:792.0px;font-size:11.5px;color:#222;letter-spacing:0.19px;-webkit-text-stroke:.18px #222;">Ornie</span>
<div class="r" style="left:1658px;top:809.5px;width:230px;height:24.0px;background:#f1f0f6;"></div>
<div class="r" style="left:1658px;top:832.5px;width:230px;height:1.5px;background:#f7f6fb;"></div>
<svg class="r" style="left:1663px;top:817.0px;" width="6" height="9" viewBox="0 0 6 9"><path d="M0 0V8.800L5 4.400Z" fill="#555"/></svg>
<span class="t" style="left:1674.1px;top:816.0px;font-size:11.5px;color:#222;letter-spacing:0.46px;-webkit-text-stroke:.18px #222;">Cornice</span>
<div class="r" style="left:1658px;top:833.5px;width:230px;height:24.0px;background:#f1f0f6;"></div>
<div class="r" style="left:1658px;top:856.5px;width:230px;height:1.5px;background:#f7f6fb;"></div>
<svg class="r" style="left:1663px;top:841.0px;" width="6" height="9" viewBox="0 0 6 9"><path d="M0 0V8.800L5 4.400Z" fill="#555"/></svg>
<span class="t" style="left:1674.1px;top:840.0px;font-size:11.5px;color:#222;letter-spacing:0.62px;-webkit-text-stroke:.18px #222;">Imbotte con mostra</span>
<div class="r" style="left:1658px;top:875.5px;width:230px;height:24.0px;background:#f1f0f6;"></div>
<div class="r" style="left:1658px;top:898.5px;width:230px;height:1.5px;background:#f7f6fb;"></div>
<svg class="r" style="left:1663px;top:883.0px;" width="6" height="9" viewBox="0 0 6 9"><path d="M0 0V8.800L5 4.400Z" fill="#555"/></svg>
<span class="t" style="left:1674.1px;top:882.0px;font-size:11.5px;color:#222;letter-spacing:0.11px;-webkit-text-stroke:.18px #222;">Parametri IFC</span>
<div class="r" style="left:1658px;top:899.5px;width:230px;height:24.0px;background:#f1f0f6;"></div>
<div class="r" style="left:1658px;top:922.5px;width:230px;height:1.5px;background:#f7f6fb;"></div>
<svg class="r" style="left:1663px;top:907.0px;" width="6" height="9" viewBox="0 0 6 9"><path d="M0 0V8.800L5 4.400Z" fill="#555"/></svg>
<span class="t" style="left:1674.1px;top:906.0px;font-size:11.5px;color:#222;letter-spacing:-0.28px;-webkit-text-stroke:.18px #222;">Fasi</span>
<div class="r" style="left:1658px;top:923.5px;width:230px;height:24.0px;background:#f1f0f6;"></div>
<div class="r" style="left:1658px;top:946.5px;width:230px;height:1.5px;background:#f7f6fb;"></div>
<svg class="r" style="left:1663px;top:931.0px;" width="6" height="9" viewBox="0 0 6 9"><path d="M0 0V8.800L5 4.400Z" fill="#555"/></svg>
<span class="t" style="left:1674.1px;top:930.0px;font-size:11.5px;color:#222;letter-spacing:0.47px;-webkit-text-stroke:.18px #222;">Dati identità</span>
<div class="r" style="left:1658px;top:736px;width:230px;height:1.5px;background:#f7f6fb;"></div>
<div class="r" style="left:1658px;top:874px;width:230px;height:1.5px;background:#f7f6fb;"></div>
<div class="r" style="left:1px;top:1001px;width:1920px;height:80px;background:#777882;"></div>
<div class="r" style="left:1px;top:1001px;width:130px;height:45px;background:#62636e;"></div>
<div class="r" style="left:1px;top:1046px;width:130px;height:3px;background:#7de3e3;"></div>
<div class="r" style="left:131px;top:1046px;width:200px;height:3px;background:#d6d6d6;"></div>
<span class="t" style="left:13.0px;top:1019.0px;font-size:13.5px;color:#86e2e2;letter-spacing:0.02px;">Ground Floor</span>
<span class="t" style="left:143.1px;top:1019.0px;font-size:13.5px;color:#dcdce0;letter-spacing:-0.07px;">Sezione AA′</span>
<span class="t" style="left:265.3px;top:1019.0px;font-size:13.5px;color:#dcdce0;letter-spacing:-0.48px;">Roof</span>
<svg class="r" style="left:105.3px;top:1021px;" width="10" height="10" viewBox="0 0 10 10"><path d="M1 1L9 9M9 1L1 9" stroke="#ececec" stroke-width="1.600"/></svg>
<svg class="r" style="left:227px;top:1021px;" width="10" height="10" viewBox="0 0 10 10"><path d="M1 1L9 9M9 1L1 9" stroke="#ececec" stroke-width="1.600"/></svg>
<svg class="r" style="left:305.3px;top:1021px;" width="10" height="10" viewBox="0 0 10 10"><path d="M1 1L9 9M9 1L1 9" stroke="#ececec" stroke-width="1.600"/></svg>
<span class="t" style="left:8.9px;top:1059.0px;font-size:12px;color:#e6e6ea;">X:</span>
<span class="t" style="left:22.4px;top:1059.0px;font-size:12px;color:#fff;font-weight:700;letter-spacing:0.13px;">-19564....</span>
<span class="t" style="left:86.1px;top:1059.0px;font-size:12px;color:#e6e6ea;">Y:</span>
<span class="t" style="left:99.5px;top:1059.0px;font-size:12px;color:#fff;font-weight:700;letter-spacing:0.52px;">7028.56</span>
<span class="t" style="left:163.3px;top:1059.0px;font-size:12px;color:#e6e6ea;">Z:</span>
<span class="t" style="left:176.0px;top:1059.0px;font-size:12px;color:#fff;font-weight:700;letter-spacing:0.65px;">0.00</span>
<span class="t" style="left:274.9px;top:1058.0px;font-size:13.5px;color:#f4f4f4;letter-spacing:0.40px;">mm</span>
<svg class="r" style="left:302px;top:1062px;" width="10" height="7" viewBox="0 0 10 7"><path d="M0 0H9.600L4.800 6Z" fill="#fff"/></svg>
<svg class="r" style="left:320.0px;top:1053.0px;" width="24" height="24" viewBox="0 0 24 24"><rect x="6.4" y="6.4" width="2" height="2" fill="#e8e8ea"/><rect x="6.4" y="9.600000000000001" width="2" height="2" fill="#e8e8ea"/><rect x="6.4" y="12.8" width="2" height="2" fill="#e8e8ea"/><rect x="6.4" y="16.0" width="2" height="2" fill="#e8e8ea"/><rect x="9.600000000000001" y="6.4" width="2" height="2" fill="#e8e8ea"/><rect x="9.600000000000001" y="9.600000000000001" width="2" height="2" fill="#e8e8ea"/><rect x="9.600000000000001" y="12.8" width="2" height="2" fill="#e8e8ea"/><rect x="9.600000000000001" y="16.0" width="2" height="2" fill="#e8e8ea"/><rect x="12.8" y="6.4" width="2" height="2" fill="#e8e8ea"/><rect x="12.8" y="9.600000000000001" width="2" height="2" fill="#e8e8ea"/><rect x="12.8" y="12.8" width="2" height="2" fill="#e8e8ea"/><rect x="12.8" y="16.0" width="2" height="2" fill="#e8e8ea"/><rect x="16.0" y="6.4" width="2" height="2" fill="#e8e8ea"/><rect x="16.0" y="9.600000000000001" width="2" height="2" fill="#e8e8ea"/><rect x="16.0" y="12.8" width="2" height="2" fill="#e8e8ea"/><rect x="16.0" y="16.0" width="2" height="2" fill="#e8e8ea"/><path d="M4.400 19.600L19.600 4.400" stroke="#3a3a40" stroke-width="1.300"/></svg>
<svg class="r" style="left:348.2px;top:1053.0px;" width="24" height="24" viewBox="0 0 24 24"><path d="M12 4.600L19.400 12L12 19.400L4.600 12Z" fill="#fff"/><path d="M8 9.400L14.600 16M9.800 7.400L16.600 14.200M6.600 11.800L12.400 17.600" stroke="#c8c8cc" stroke-width=".7"/></svg>
<svg class="r" style="left:376.1px;top:1053.0px;" width="24" height="24" viewBox="0 0 24 24"><path d="M5.400 6.400H18.600L19.400 8.200H4.600ZM5.400 9.400H18.600L19.400 11.200H4.600ZM5.400 12.400H18.600L19.400 14.200H4.600ZM5.400 15.400H18.600L19.400 17.200H4.600Z" fill="#f2f2f4"/></svg>
<svg class="r" style="left:403.6px;top:1053.0px;" width="24" height="24" viewBox="0 0 24 24"><path d="M4.600 12C8 6.800 16 6.800 19.400 12C16 17.200 8 17.200 4.600 12Z" fill="#fff"/><circle cx="12" cy="12" r="3.200" fill="#777882"/><circle cx="12" cy="12" r="1.500" fill="#fff"/></svg>
<svg class="r" style="left:432.3px;top:1053.0px;" width="24" height="24" viewBox="0 0 24 24"><path d="M4.400 10.600C8 14.400 16 14.400 19.600 10.600" fill="none" stroke="#fff" stroke-width="1.100"/><path d="M6.400 13L5.400 14.800M9.800 14.400L9.400 16.400M14.200 14.400L14.600 16.400M17.600 13L18.600 14.800" stroke="#fff" stroke-width="1"/></svg>
<div class="r" style="left:472px;top:1049px;width:128px;height:32px;background:#9decec;"></div>
<div class="r" style="left:760px;top:1049px;width:32px;height:32px;background:#9decec;"></div>
<svg class="r" style="left:475.2px;top:1053.0px;" width="24" height="24" viewBox="0 0 24 24"><path d="M3.600 10.400H13.400M15.800 12.800V20.400" stroke="#3a3d44" stroke-width="1.100"/><circle cx="15.8" cy="10.4" r="2.6" fill="none" stroke="#3a3d44" stroke-width=".9"/><circle cx="15.8" cy="10.4" r=".8" fill="#3a3d44"/></svg>
<svg class="r" style="left:507.70000000000005px;top:1053.0px;" width="24" height="24" viewBox="0 0 24 24"><path d="M8.400 2L14.200 13.200M4.400 15.800H9.600M14.400 15.800H19.600" stroke="#3a3d44" stroke-width="1.100"/><circle cx="12" cy="15.8" r="2.4" fill="none" stroke="#3a3d44" stroke-width=".9"/><circle cx="12" cy="15.8" r=".8" fill="#3a3d44"/><circle cx="3" cy="15.8" r="1.6" fill="none" stroke="#3a3d44" stroke-width=".9"/><circle cx="21" cy="15.8" r="1.6" fill="none" stroke="#3a3d44" stroke-width=".9"/></svg>
<svg class="r" style="left:539.7px;top:1053.0px;" width="24" height="24" viewBox="0 0 24 24"><path d="M2.400 15H8M12.800 15H18.400" stroke="#3a3d44" stroke-width="1.100"/><path d="M13 17.800H20" stroke="#3a3d44" stroke-width=".8" stroke-dasharray="1 1"/><path d="M15.600 6.400L19.800 11.200M19.800 6.400L15.600 11.200" stroke="#3a3d44" stroke-width=".9"/><circle cx="10.4" cy="15" r="2.4" fill="none" stroke="#3a3d44" stroke-width=".9"/><circle cx="10.4" cy="15" r=".8" fill="#3a3d44"/></svg>
<svg class="r" style="left:571.0px;top:1053.0px;" width="24" height="24" viewBox="0 0 24 24"><path d="M6.400 14H9.600M14.400 14H17.600M12 8.400V11.600M12 16.400V19M14 16L19.400 22" stroke="#3a3d44" stroke-width="1.100"/><circle cx="12" cy="14" r="2.4" fill="none" stroke="#3a3d44" stroke-width=".9"/><circle cx="12" cy="14" r=".8" fill="#3a3d44"/><circle cx="4.6" cy="14" r="1.6" fill="none" stroke="#3a3d44" stroke-width=".9"/><circle cx="19.4" cy="14" r="1.6" fill="none" stroke="#3a3d44" stroke-width=".9"/><circle cx="12" cy="6.4" r="1.6" fill="none" stroke="#3a3d44" stroke-width=".9"/><circle cx="12" cy="20.8" r="1.6" fill="none" stroke="#3a3d44" stroke-width=".9"/></svg>
<svg class="r" style="left:603.4px;top:1053.0px;" width="24" height="24" viewBox="0 0 24 24"><path d="M3 3.400L7.400 7" stroke="#eeeef2" stroke-width=".9" stroke-dasharray="1.200 1"/><path d="M3.600 9.800H7M11.400 11.600L16.600 17.800" stroke="#eeeef2" stroke-width="1"/><circle cx="9.4" cy="9.8" r="2.4" fill="none" stroke="#eeeef2" stroke-width=".9"/><circle cx="9.4" cy="9.8" r=".8" fill="#eeeef2"/><circle cx="18" cy="19.6" r="1.6" fill="none" stroke="#eeeef2" stroke-width=".9"/></svg>
<svg class="r" style="left:635.4px;top:1053.0px;" width="24" height="24" viewBox="0 0 24 24"><path d="M2.400 9H9M13.800 9H21.600" stroke="#eeeef2" stroke-width="1"/><path d="M2.400 16.400H15" stroke="#eeeef2" stroke-width=".9" stroke-dasharray="1.200 1"/><circle cx="11.4" cy="9" r="2.4" fill="none" stroke="#eeeef2" stroke-width=".9"/><circle cx="11.4" cy="9" r=".8" fill="#eeeef2"/><circle cx="17.4" cy="16.4" r="1.6" fill="none" stroke="#eeeef2" stroke-width=".9"/><path d="M19.200 16.400H21.600" stroke="#eeeef2" stroke-width="1"/></svg>
<svg class="r" style="left:666.7px;top:1053.0px;" width="24" height="24" viewBox="0 0 24 24"><path d="M9.400 2.400V7.600" stroke="#eeeef2" stroke-width="1"/><path d="M3 17.800H13" stroke="#eeeef2" stroke-width=".9" stroke-dasharray="1.200 1"/><circle cx="9.4" cy="10.2" r="2.4" fill="none" stroke="#eeeef2" stroke-width=".9"/><circle cx="9.4" cy="10.2" r=".8" fill="#eeeef2"/><circle cx="15" cy="17.8" r="1.6" fill="none" stroke="#eeeef2" stroke-width=".9"/><path d="M16.800 17.800H21.600M9.400 12.800V17.600" stroke="#eeeef2" stroke-width="1"/></svg>
<svg class="r" style="left:700.0px;top:1053.0px;" width="24" height="24" viewBox="0 0 24 24"><path d="M5 2.600V21.400M19 2.600V21.400M2.600 5H21.400M2.600 19H21.400" stroke="#eeeef2" stroke-width=".9" stroke-dasharray="1.200 1"/><circle cx="12" cy="12.4" r="2.6" fill="none" stroke="#eeeef2" stroke-width=".9"/><circle cx="12" cy="12.4" r=".8" fill="#eeeef2"/><path d="M14.800 12.400H19M12 15.200V19" stroke="#eeeef2" stroke-width="1"/></svg>
<svg class="r" style="left:732.0px;top:1053.0px;" width="24" height="24" viewBox="0 0 24 24"><path d="M4 2.600V20.600M4 20.600L20.400 3.600" stroke="#eeeef2" stroke-width="1"/><path d="M4 20.600H21.400M11 16.400H21" stroke="#eeeef2" stroke-width=".9" stroke-dasharray="1.200 1"/><circle cx="11.4" cy="13" r="2.4" fill="none" stroke="#eeeef2" stroke-width=".9"/><circle cx="11.4" cy="13" r=".8" fill="#eeeef2"/></svg>
<svg class="r" style="left:764.0px;top:1053.0px;" width="24" height="24" viewBox="0 0 24 24"><path d="M12 2.600L20 7.200V16.800L12 21.400L4 16.800V7.200Z" fill="none" stroke="#3a3d44" stroke-width=".9" stroke-dasharray="1.600 1.200"/><path d="M12 14.600V21M9.600 11.800L4.400 7.800M14.400 11.800L19.600 7.800" stroke="#3a3d44" stroke-width="1.100"/><circle cx="12" cy="12.4" r="2.4" fill="none" stroke="#3a3d44" stroke-width=".9"/><circle cx="12" cy="12.4" r=".8" fill="#3a3d44"/></svg>
<span class="t" style="left:802.3px;top:1059.0px;font-size:12.5px;color:#b4b4bc;letter-spacing:-0.29px;">Angoli</span>
<div class="r" style="left:851.500px;top:1055.500px;width:66px;height:19px;background:#a9a9af;border-radius:2px"></div>
<span class="t" style="left:888.9px;top:1059.0px;font-size:12px;color:#8c8c94;letter-spacing:-0.75px;">22.5;</span>
<div class="r" style="left:1849px;top:1049px;width:32px;height:32px;background:#2aafae;"></div>
<div class="r" style="left:1855.5px;top:1057px;width:19.0px;height:14px;background:#ffffff;"></div>
<div class="r" style="left:1855.5px;top:1071px;width:19.0px;height:2.5px;background:#d4ecec;"></div>
<div class="r" style="left:1888px;top:1057px;width:8.5px;height:14px;background:#ffffff;"></div>
<div class="r" style="left:1897.8px;top:1057px;width:8.600000000000136px;height:14px;background:#ffffff;"></div>
<div class="r" style="left:1888px;top:1071px;width:18.40000000000009px;height:2.5px;background:#d0d0d4;"></div>
<div class="r" style="left:0;top:0;width:1920px;height:1080px;border:1px solid #4a86d0;pointer-events:none"></div>
</div></body></html>
